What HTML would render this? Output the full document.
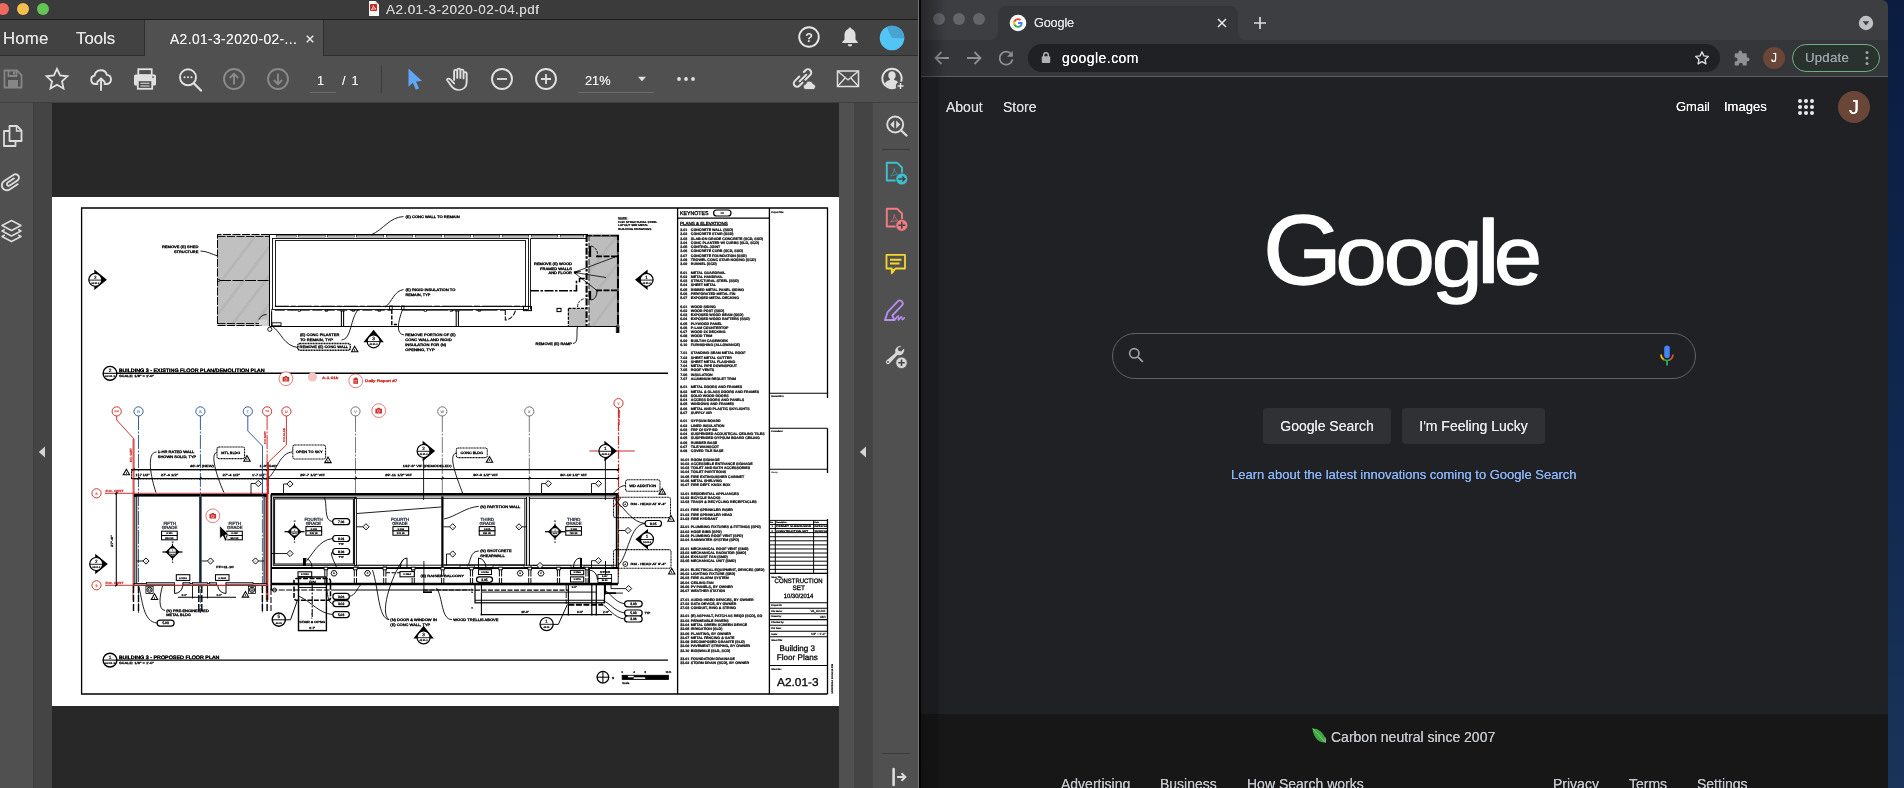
<!DOCTYPE html>
<html lang="en">
<head>
<meta charset="utf-8">
<title>Screen</title>
<style>
*{box-sizing:border-box;margin:0;padding:0}
html,body{width:1904px;height:788px;overflow:hidden;background:#0d1a33;font-family:"Liberation Sans",sans-serif}
.abs{position:absolute}
#acro,#chr{will-change:transform}
#desk{position:absolute;left:0;top:0;width:1904px;height:788px;background:linear-gradient(180deg,#0b1c40 0%,#10284f 55%,#1a3358 100%)}
/* ---------- Acrobat ---------- */
#acro{position:absolute;left:0;top:0;width:919px;height:788px;background:#282828;overflow:hidden}
#acro .titlebar{position:absolute;left:0;top:0;width:919px;height:19px;background:#3b3b3b}
#acro .titleline{position:absolute;left:0;top:19px;width:919px;height:1px;background:#1c1c1c}
#acro .tabbar{position:absolute;left:0;top:20px;width:919px;height:36px;background:#424242;border-bottom:1px solid #2e2e2e}
#acro .acttab{position:absolute;left:144px;top:20px;width:180px;height:36px;background:#505050;border-left:1px solid #2e2e2e;border-right:1px solid #2e2e2e}
#acro .toolbar{position:absolute;left:0;top:56px;width:919px;height:47px;background:#505050}
#acro .toolline{position:absolute;left:0;top:102px;width:919px;height:1px;background:#3e3e3e}
#acro .lrail{position:absolute;left:0;top:103px;width:33px;height:685px;background:#505050}
#acro .lstrip{position:absolute;left:33px;top:103px;width:19px;height:685px;background:#444444;border-left:1px solid #404040}
#acro .rscroll{position:absolute;left:839px;top:103px;width:15px;height:685px;background:#505050}
#acro .rstrip{position:absolute;left:854px;top:103px;width:18px;height:685px;background:#444444}
#acro .rrail{position:absolute;left:872px;top:103px;width:47px;height:685px;background:#505050;border-left:1px solid #454545}
#acro .page{position:absolute;left:52px;top:197px;width:787px;height:509px;background:#fff}
.tl{position:absolute;width:12px;height:12px;border-radius:50%}
.atxt{position:absolute;color:#e6e6e6;white-space:nowrap;text-shadow:0 0 .45px rgba(255,255,255,.75)}
/* ---------- Chrome ---------- */
#chr{position:absolute;left:920px;top:0;width:968px;height:788px;background:#202124;overflow:hidden;border-top-right-radius:6px}
#chr .tabstrip{position:absolute;left:0;top:0;width:968px;height:40px;background:#3c3e41}
#chr .tab{position:absolute;left:78px;top:6px;width:240px;height:34px;background:#35363a;border-radius:8px 8px 0 0}
#chr .tbar{position:absolute;left:0;top:40px;width:968px;height:36px;background:#35363a}
#chr .tline{position:absolute;left:0;top:76px;width:968px;height:1px;background:#5b5d60}
#chr .url{position:absolute;left:108px;top:44px;width:692px;height:28px;border-radius:14px;background:#202124}
.gtxt{position:absolute;white-space:nowrap;color:#e8eaed;text-shadow:0 0 .4px currentColor}
#chr .foot{position:absolute;left:0;top:714px;width:968px;height:74px;background:#171717}
#chr .shade{position:absolute;left:0;top:0;width:26px;height:77px;background:linear-gradient(90deg,rgba(0,0,0,.36),rgba(0,0,0,.2) 55%,rgba(0,0,0,0))}
#chr .shade2{position:absolute;left:0;top:77px;width:20px;height:711px;background:linear-gradient(90deg,rgba(0,0,0,.3),rgba(0,0,0,.2) 15%,rgba(0,0,0,.17) 90%,rgba(0,0,0,0))}
</style>
</head>
<body>
<div id="desk"></div>

<!-- ================= ACROBAT ================= -->
<div id="acro">
  <div class="titlebar"></div><div class="titleline"></div>
  <div class="tabbar"></div><div class="acttab"></div>
  <div class="toolbar"></div><div class="toolline"></div>
  <div class="lrail"></div><div class="lstrip"></div>
  <div class="rscroll"></div><div class="rstrip"></div><div class="rrail"></div>
  <div class="page"></div>
  <!--ACRO-UI-START-->
  <!-- traffic lights -->
  <div class="tl" style="left:-3px;top:3px;background:#ed6a5e"></div>
  <div class="tl" style="left:17px;top:3px;background:#f5bf4f"></div>
  <div class="tl" style="left:37px;top:3px;background:#62c554"></div>
  <!-- title -->
  <svg class="abs" style="left:368px;top:0" width="12" height="18" viewBox="0 0 12 18"><path d="M1 1h6.5L11 4.5V16H1z" fill="#fafafa"/><path d="M7.5 1V4.5H11z" fill="#d0d0d0"/><rect x="2" y="4" width="7" height="7" rx="1" fill="#c8281e"/><path d="M3.2 9.6c1.2-.6 2-2.2 2.2-4 .3 1.800 1.300 3 2.600 3.300-1.700 0-3.400.2-4.800.7z" fill="none" stroke="#fff" stroke-width=".7"/></svg>
  <div class="atxt" style="left:386px;top:2px;font-size:13.5px;line-height:16px;color:#d2d2d2;letter-spacing:0.46px">A2.01-3-2020-02-04.pdf</div>
  <!-- tab bar -->
  <div class="atxt" style="left:3px;top:28.500px;font-size:16.8px;line-height:20px;color:#e4e4e4;letter-spacing:.2px">Home</div>
  <div class="atxt" style="left:76px;top:28.500px;font-size:16.8px;line-height:20px;color:#e4e4e4">Tools</div>
  <div class="atxt" style="left:170px;top:31px;font-size:13.8px;line-height:18px;color:#f2f2f2;letter-spacing:.4px">A2.01-3-2020-02-...</div>
  <svg class="abs" style="left:305px;top:34px" width="10" height="10" viewBox="0 0 10 10"><path d="M1.800 1.800l6.400 6.400M8.200 1.800l-6.400 6.400" stroke="#e6e6e6" stroke-width="1.500"/></svg>
  <!-- help -->
  <svg class="abs" style="left:797px;top:25px" width="24" height="24" viewBox="0 0 24 24"><circle cx="12" cy="12" r="9.800" fill="none" stroke="#e6e6e6" stroke-width="1.900"/><text x="12" y="16.600" text-anchor="middle" font-family="Liberation Sans, sans-serif" font-weight="bold" font-size="12.500" fill="#e6e6e6">?</text></svg>
  <!-- bell -->
  <svg class="abs" style="left:838px;top:25px" width="24" height="24" viewBox="0 0 24 24"><path d="M12 2.500c.9 0 1.500.6 1.500 1.400 2.600.8 4 3 4 5.800v4.800l2.200 2.600v1H4.300v-1l2.200-2.600V9.700c0-2.800 1.400-5 4-5.800 0-.8.600-1.400 1.500-1.400z" fill="#e0e0e0"/><path d="M9.800 19.300h4.400a2.200 2.200 0 0 1-4.400 0z" fill="#e0e0e0"/></svg>
  <!-- avatar -->
  <svg class="abs" style="left:879px;top:25px" width="26" height="26" viewBox="0 0 26 26"><circle cx="13" cy="13" r="12.300" fill="#52c5f5"/><path d="M13 13L7.500 2a12.300 12.300 0 0 1 17.800 11.500z" fill="#46a3d2"/></svg>

  <!-- toolbar icons -->
  <!-- save (disabled) -->
  <svg class="abs" style="left:2px;top:68px" width="22" height="22" viewBox="0 0 22 22"><path d="M2.500 2.500h12.500l4.500 4.500v12.500h-17z" fill="none" stroke="#868686" stroke-width="1.800"/><path d="M6.500 2.500v5.500h8v-5.500" fill="none" stroke="#868686" stroke-width="1.800"/><rect x="11" y="3.500" width="2" height="3" fill="#868686"/><rect x="6" y="12" width="10" height="7" fill="#868686"/></svg>
  <!-- star -->
  <svg class="abs" style="left:44px;top:66px" width="26" height="26" viewBox="0 0 26 26"><path d="M13 2.800l3.100 6.700 7.300.8-5.400 5 1.500 7.200L13 18.800 6.500 22.500 8 15.300l-5.400-5 7.300-.8z" fill="none" stroke="#e0e0e0" stroke-width="1.800" stroke-linejoin="miter"/></svg>
  <!-- cloud upload -->
  <svg class="abs" style="left:88px;top:66px" width="26" height="26" viewBox="0 0 26 26"><path d="M9.500 18H7.300a4.300 4.300 0 0 1-.7-8.500 6.300 6.300 0 0 1 12.300-.6 4.600 4.600 0 0 1 .3 9.100h-2.700" fill="none" stroke="#e0e0e0" stroke-width="1.900" stroke-linecap="round"/><path d="M13 24V12.500M9.300 16L13 12.300 16.700 16" fill="none" stroke="#e0e0e0" stroke-width="1.900" stroke-linecap="round" stroke-linejoin="round"/></svg>
  <!-- printer -->
  <svg class="abs" style="left:132px;top:66px" width="26" height="26" viewBox="0 0 26 26"><rect x="6.300" y="3.200" width="13.400" height="6" fill="none" stroke="#e0e0e0" stroke-width="1.800"/><path d="M3.500 8.500h19a1.500 1.500 0 0 1 1.500 1.500v8a1.500 1.500 0 0 1-1.500 1.500H20.500V14h-15v5.500H3.500A1.500 1.500 0 0 1 2 18v-8a1.500 1.500 0 0 1 1.500-1.500z" fill="#e0e0e0"/><rect x="5.800" y="14.300" width="14.400" height="8.500" fill="#505050" stroke="#e0e0e0" stroke-width="1.800"/><path d="M8.500 17.300h9M8.500 20h9" stroke="#e0e0e0" stroke-width="1.100"/><rect x="20" y="10.500" width="2" height="1.200" fill="#505050"/></svg>
  <!-- find -->
  <svg class="abs" style="left:177px;top:66px" width="26" height="26" viewBox="0 0 26 26"><circle cx="11" cy="11.300" r="8" fill="none" stroke="#e0e0e0" stroke-width="1.900"/><path d="M17 17.500l7 7" stroke="#e0e0e0" stroke-width="2.300" stroke-linecap="round"/><circle cx="7.600" cy="11.300" r="1.050" fill="#e0e0e0"/><circle cx="11" cy="11.300" r="1.050" fill="#e0e0e0"/><circle cx="14.400" cy="11.300" r="1.050" fill="#e0e0e0"/></svg>
  <!-- up / down (disabled) -->
  <svg class="abs" style="left:222px;top:67px" width="24" height="24" viewBox="0 0 24 24"><circle cx="12" cy="12" r="10" fill="none" stroke="#8a8a8a" stroke-width="1.900"/><path d="M12 17.500V7M7.800 11L12 6.800 16.200 11" fill="none" stroke="#8a8a8a" stroke-width="1.900"/></svg>
  <svg class="abs" style="left:266px;top:67px" width="24" height="24" viewBox="0 0 24 24"><circle cx="12" cy="12" r="10" fill="none" stroke="#8a8a8a" stroke-width="1.900"/><path d="M12 6.500V17M7.800 13L12 17.200 16.200 13" fill="none" stroke="#8a8a8a" stroke-width="1.900"/></svg>
  <div class="atxt" style="left:317px;top:73px;font-size:12.700px;line-height:16px;color:#f0f0f0">1</div>
  <div class="abs" style="left:310px;top:92px;width:26px;height:1px;background:#6c6c6c"></div>
  <div class="atxt" style="left:342px;top:73px;font-size:12.700px;line-height:16px;color:#f0f0f0;word-spacing:2.500px">/ 1</div>
  <div class="abs" style="left:381px;top:65px;width:1px;height:28px;background:#3a3a3a"></div>
  <!-- pointer -->
  <svg class="abs" style="left:402px;top:66px" width="24" height="26" viewBox="0 0 24 26"><path d="M6.500 2.500v18.200l4.300-4 3.100 7 3.200-1.500-3.100-6.800 6-.3z" fill="#5fa8f5"/></svg>
  <!-- hand -->
  <svg class="abs" style="left:445px;top:66px" width="26" height="26" viewBox="0 0 26 26"><path d="M9.300 14V5.300a1.400 1.400 0 0 1 2.800 0V12 3.900a1.400 1.400 0 0 1 2.800 0V12 4.900a1.400 1.400 0 0 1 2.800 0V12.500 7.500a1.400 1.400 0 0 1 2.800 0V16c0 4.800-2.800 8-7 8-3.400 0-5.200-1.600-7-4.500L3.200 14.400c-.6-1 .2-2.200 1.400-1.800 1 .3 1.700 1 2.400 2l2.300 2.900" fill="none" stroke="#e0e0e0" stroke-width="1.700" stroke-linejoin="round" stroke-linecap="round" transform="translate(-1.300,0) scale(1.120,1)"/></svg>
  <!-- minus / plus -->
  <svg class="abs" style="left:490px;top:67px" width="24" height="24" viewBox="0 0 24 24"><circle cx="12" cy="12" r="10" fill="none" stroke="#e0e0e0" stroke-width="1.900"/><path d="M7 12h10" stroke="#e0e0e0" stroke-width="1.800"/></svg>
  <svg class="abs" style="left:534px;top:67px" width="24" height="24" viewBox="0 0 24 24"><circle cx="12" cy="12" r="10" fill="none" stroke="#e0e0e0" stroke-width="1.900"/><path d="M7 12h10M12 7v10" stroke="#e0e0e0" stroke-width="1.800"/></svg>
  <div class="atxt" style="left:585px;top:73px;font-size:12.800px;line-height:16px;color:#f0f0f0">21%</div>
  <div class="abs" style="left:578px;top:92px;width:76px;height:1px;background:#6c6c6c"></div>
  <svg class="abs" style="left:637px;top:76px" width="10" height="6" viewBox="0 0 10 6"><path d="M1 .8h8L5 5.200z" fill="#e0e0e0"/></svg>
  <svg class="abs" style="left:676px;top:76px" width="22" height="6" viewBox="0 0 22 6"><circle cx="3" cy="3" r="1.900" fill="#e0e0e0"/><circle cx="10" cy="3" r="1.900" fill="#e0e0e0"/><circle cx="17" cy="3" r="1.900" fill="#e0e0e0"/></svg>
  <!-- link cloud -->
  <svg class="abs" style="left:790px;top:66px" width="28" height="26" viewBox="0 0 28 26"><g fill="none" stroke="#e0e0e0" stroke-width="2" stroke-linecap="round"><path d="M9.300 10.500l-4.600 4.600a3.300 3.300 0 0 0 4.700 4.700l3.200-3.200"/><path d="M13.800 6l1.800-1.800a3.300 3.300 0 0 1 4.700 4.700l-4.900 4.900"/><path d="M9.600 15.400l6.600-6.600"/></g><path d="M16 23.500a2.600 2.600 0 0 1-.3-5.200 3.700 3.700 0 0 1 7.200-.6 3 3 0 0 1 .6 5.800z" fill="#e0e0e0" stroke="#505050" stroke-width=".8"/></svg>
  <!-- mail -->
  <svg class="abs" style="left:836px;top:68px" width="24" height="22" viewBox="0 0 24 22"><rect x="1.500" y="3" width="21" height="15.500" fill="none" stroke="#e0e0e0" stroke-width="1.500"/><path d="M1.500 3L12 12 22.500 3M1.500 18.500L9.300 9.800M22.500 18.500L14.700 9.800" fill="none" stroke="#e0e0e0" stroke-width="1.300"/></svg>
  <!-- user add -->
  <svg class="abs" style="left:879px;top:66px" width="28" height="26" viewBox="0 0 28 26"><circle cx="13" cy="12.500" r="9.700" fill="none" stroke="#e0e0e0" stroke-width="1.900"/><path d="M13 5.200c2.300 0 3.700 1.700 3.700 4 0 1.600-.7 3-1.600 3.700v1.200c2.300.6 4.200 1.700 5 3.300A9.600 9.600 0 0 1 13 21.800a9.600 9.600 0 0 1-7.100-4.400c.8-1.600 2.700-2.700 5-3.300v-1.200c-.9-.7-1.600-2.100-1.600-3.700 0-2.300 1.400-4 3.700-4z" fill="#e0e0e0"/><circle cx="21.500" cy="20" r="4.600" fill="#505050"/><path d="M18.500 20h6M21.500 17v6" stroke="#e0e0e0" stroke-width="1.500"/></svg>

  <!-- left rail icons -->
  <svg class="abs" style="left:2px;top:124px" width="22" height="24" viewBox="0 0 22 24"><path d="M7.500 2h7.500l4.500 4.500V17H7.500z" fill="none" stroke="#dcdcdc" stroke-width="1.800" stroke-linejoin="round"/><path d="M14.500 2.300V7h4.700" fill="none" stroke="#dcdcdc" stroke-width="1.400"/><path d="M7 7H2v15h11.500v-4.500" fill="none" stroke="#dcdcdc" stroke-width="1.800" stroke-linejoin="round"/></svg>
  <svg class="abs" style="left:-2px;top:169px" width="26" height="26" viewBox="0 0 24 24"><path transform="rotate(-33 12 12.500)" d="M2 12.500C2 9.460 4.460 7 7.500 7H18c2.210 0 4 1.790 4 4s-1.790 4-4 4H9.500C8.120 15 7 13.880 7 12.500S8.120 10 9.500 10H17v1.700H9.500c-1.050 0-1.050 1.600 0 1.600H18c1.300 0 2.300-1 2.300-2.300S19.300 8.700 18 8.700H7.500c-2.100 0-3.800 1.700-3.800 3.800s1.700 3.800 3.800 3.800H17V18H7.500C4.460 18 2 15.540 2 12.500z" fill="#dcdcdc"/></svg>
  <svg class="abs" style="left:0px;top:218px" width="24" height="26" viewBox="0 0 24 26"><g fill="none" stroke="#dcdcdc" stroke-width="1.500" stroke-linejoin="round"><path d="M11.500 2.500l9.500 5-9.500 5-9.500-5z"/><path d="M4.800 11.500L2 13l9.500 5 9.500-5-2.800-1.500"/><path d="M4.800 17L2 18.500l9.500 5 9.500-5-2.800-1.500"/></g></svg>
  <!-- collapse arrows -->
  <svg class="abs" style="left:38px;top:446px" width="8" height="12" viewBox="0 0 8 12"><path d="M7 .5v11L.8 6z" fill="#d4d4d4"/></svg>
  <svg class="abs" style="left:859px;top:446px" width="8" height="12" viewBox="0 0 8 12"><path d="M7 .5v11L.8 6z" fill="#d4d4d4"/></svg>
  <!-- right rail icons -->
  <svg class="abs" style="left:883px;top:112px" width="26" height="26" viewBox="0 0 26 26"><circle cx="12.200" cy="12.500" r="8" fill="none" stroke="#dcdcdc" stroke-width="1.900"/><path d="M18.200 18.500l5.300 5" stroke="#dcdcdc" stroke-width="2.400" stroke-linecap="round"/><path d="M11.200 8.500v8l-4-4zM13.200 8.500v8l4-4z" fill="#dcdcdc"/></svg>
  <div class="abs" style="left:882px;top:149px;width:28px;height:1px;background:#3a3a3a"></div>
  <!-- export pdf -->
  <svg class="abs" style="left:884px;top:160px" width="26" height="28" viewBox="0 0 26 28"><path d="M2.800 2.800h10.500l4.700 4.700V20.500H2.800z" fill="none" stroke="#3cc0cf" stroke-width="1.900" stroke-linejoin="round"/><path d="M6.500 16c2.200-1.200 3.600-4.200 3.800-7.500.5 3.300 2.200 5.600 4.700 6.300-3.200-.2-6 .3-8.500 1.200z" fill="none" stroke="#3c8d9b" stroke-width="1"/><circle cx="17.800" cy="19" r="6" fill="#3cc0cf" stroke="#505050" stroke-width=".8"/><path d="M14.300 19h6.500M18.300 16.400l2.700 2.600-2.700 2.600" fill="none" stroke="#444" stroke-width="1.400"/></svg>
  <!-- create pdf -->
  <svg class="abs" style="left:884px;top:206px" width="26" height="28" viewBox="0 0 26 28"><path d="M2.800 2.800h10.500l4.700 4.700V20.500H2.800z" fill="none" stroke="#f17d84" stroke-width="1.900" stroke-linejoin="round"/><path d="M6.500 16c2.200-1.200 3.600-4.200 3.800-7.500.5 3.300 2.200 5.600 4.700 6.300-3.200-.2-6 .3-8.500 1.200z" fill="none" stroke="#c2676d" stroke-width="1"/><circle cx="17.800" cy="19.300" r="6" fill="#f17d84" stroke="#505050" stroke-width=".8"/><path d="M14.300 19.300h7M17.800 15.800v7" fill="none" stroke="#444" stroke-width="1.500"/></svg>
  <!-- comment -->
  <svg class="abs" style="left:884px;top:252px" width="24" height="26" viewBox="0 0 24 26"><path d="M2.500 2.800h18.500v13.700H11.500l-3.700 4.700v-4.700H2.500z" fill="none" stroke="#f5d52b" stroke-width="1.800" stroke-linejoin="round"/><path d="M8 17l0 4 3.300-4z" fill="#f5d52b"/><path d="M6 7.800h11.500M6 11.500h9.500" stroke="#f5d52b" stroke-width="1.900"/></svg>
  <!-- fill & sign -->
  <svg class="abs" style="left:882px;top:298px" width="28" height="26" viewBox="0 0 28 26"><path d="M3 22l2.600-7.800L15.800 3.300c1.100-1.200 2.700-1.200 3.800-.1l.4.400c1.100 1.100 1.100 2.700 0 3.800L10.300 17.500 12.500 22z" fill="none" stroke="#b78df0" stroke-width="1.900" stroke-linejoin="round" transform="translate(0,0)"/><path d="M3 22.200h9.500c1.500-1.500 2.700-4.200 3.600-4.200 1 0-.4 4 .6 4 1.100 0 1.600-3.300 2.600-3.300s.3 3 1.300 3c.7 0 1.200-1.500 1.800-2" fill="none" stroke="#b78df0" stroke-width="1.500" stroke-linecap="round" stroke-linejoin="round"/></svg>
  <!-- wrench plus -->
  <svg class="abs" style="left:883px;top:343px" width="28" height="28" viewBox="0 0 28 28"><path d="M18.600 3.300a5.200 5.200 0 0 0-6.300 6.800L3.500 17.500a2.100 2.100 0 1 0 3 3l8-8.500a5.200 5.200 0 0 0 6.600-6.500l-3 3-2.700-.7-.7-2.700z" fill="#d6d6d6"/><circle cx="5" cy="19" r=".9" fill="#505050"/><circle cx="18.500" cy="19.800" r="5.800" fill="#d6d6d6" stroke="#505050" stroke-width=".8"/><path d="M15.300 19.800h6.400M18.500 16.600v6.400" stroke="#444" stroke-width="1.500"/></svg>
  <div class="abs" style="left:882px;top:753px;width:28px;height:1px;background:#3c3c3c"></div>
  <svg class="abs" style="left:890px;top:767px" width="20" height="20" viewBox="0 0 20 20"><path d="M3.600 2v16" stroke="#dcdcdc" stroke-width="2.600" stroke-linecap="round"/><path d="M7 10h8M11.500 6.300L15.300 10l-3.800 3.700" fill="none" stroke="#dcdcdc" stroke-width="2"/></svg>
<!--ACRO-UI-END-->
  <!--PDF-S-->
<svg class="abs" style="left:52px;top:197px" width="787" height="509" viewBox="52 197 787 509" font-family="Liberation Sans, sans-serif" fill="#000" text-rendering="geometricPrecision">
<path d="M827.500 208 H81.600 V694 H827.500" fill="none" stroke="#000" stroke-width="1.3125"/>
<line x1="827.5" y1="207.5" x2="827.5" y2="398" stroke="#000" stroke-width="1.3125"/>
<line x1="677.6" y1="208" x2="677.6" y2="694" stroke="#000" stroke-width="1.3125"/>
<line x1="769.4" y1="208" x2="769.4" y2="694" stroke="#000" stroke-width="1.3125"/>
<line x1="677.6" y1="218.1" x2="769.4" y2="218.1" stroke="#000" stroke-width="1.1375"/>
<text x="680" y="215.12" font-size="5.6" textLength="28.5" lengthAdjust="spacingAndGlyphs" font-weight="normal" stroke="#000" stroke-width="0.3">KEYNOTES</text>
<rect x="713.6" y="210" width="17.4" height="6" fill="none" stroke="#000" stroke-width="1.2249999999999999" rx="3"/>
<line x1="720.5" y1="213" x2="724" y2="213" stroke="#000" stroke-width="1.05"/>
<text x="680" y="224.62" font-size="4.5" textLength="47.8" lengthAdjust="spacingAndGlyphs" font-weight="normal" stroke="#000" stroke-width="0.28">PLANS &amp; ELEVATIONS</text>
<line x1="680" y1="225.3" x2="727.8" y2="225.3" stroke="#000" stroke-width="0.7875"/>
<g font-size="3.62" font-weight="bold" stroke="#000" stroke-width=".2">
<text x="680.2" y="230.7">3.01</text><text x="690.8" y="230.7">CONCRETE WALL (SSD)</text>
<text x="680.2" y="234.7">3.02</text><text x="690.8" y="234.7">CONCRETE STAIR (SSD)</text>
<text x="680.2" y="239.7">3.03</text><text x="690.8" y="239.7">SLAB-ON GRADE CONCRETE (SCD, SSD)</text>
<text x="680.2" y="243.7">3.04</text><text x="690.8" y="243.7">CONC PLANTER W/ CURBS (SLD, SCD)</text>
<text x="680.2" y="247.8">3.05</text><text x="690.8" y="247.8">CONTROL JOINT</text>
<text x="680.2" y="251.7">3.06</text><text x="690.8" y="251.7">CONCRETE CURB (SCD, SSD)</text>
<text x="680.2" y="256.6">3.07</text><text x="690.8" y="256.6">CONCRETE FOUNDATION (SSD)</text>
<text x="680.2" y="260.7">3.08</text><text x="690.8" y="260.7">TROWEL CONC STAIR NOSING (SCD)</text>
<text x="680.2" y="264.7">3.09</text><text x="690.8" y="264.7">RUNNEL (SCD)</text>
<text x="680.2" y="273.9">5.01</text><text x="690.8" y="273.9">METAL GUARDRAIL</text>
<text x="680.2" y="277.8">5.02</text><text x="690.8" y="277.8">METAL HANDRAIL</text>
<text x="680.2" y="281.8">5.03</text><text x="690.8" y="281.8">STRUCTURAL STEEL (SSD)</text>
<text x="680.2" y="285.8">5.04</text><text x="690.8" y="285.8">SHEET METAL</text>
<text x="680.2" y="290.6">5.05</text><text x="690.8" y="290.6">RIBBED METAL PANEL SIDING</text>
<text x="680.2" y="294.6">5.06</text><text x="690.8" y="294.6">PERFORATED METAL FIN</text>
<text x="680.2" y="298.6">5.07</text><text x="690.8" y="298.6">EXPOSED METAL DECKING</text>
<text x="680.2" y="307.6">6.01</text><text x="690.8" y="307.6">WOOD SIDING</text>
<text x="680.2" y="311.6">6.02</text><text x="690.8" y="311.6">WOOD POST (SSD)</text>
<text x="680.2" y="315.6">6.03</text><text x="690.8" y="315.6">EXPOSED WOOD BEAM (SSD)</text>
<text x="680.2" y="319.6">6.04</text><text x="690.8" y="319.6">EXPOSED WOOD RAFTERS (SSD)</text>
<text x="680.2" y="324.6">6.05</text><text x="690.8" y="324.6">PLYWOOD PANEL</text>
<text x="680.2" y="328.6">6.06</text><text x="690.8" y="328.6">P-LAM COUNTERTOP</text>
<text x="680.2" y="332.7">6.07</text><text x="690.8" y="332.7">WOOD 2X DECKING</text>
<text x="680.2" y="336.7">6.08</text><text x="690.8" y="336.7">WOOD TRIM</text>
<text x="680.2" y="341.6">6.09</text><text x="690.8" y="341.6">BUILT-IN CASEWORK</text>
<text x="680.2" y="345.6">6.10</text><text x="690.8" y="345.6">FURNISHING (ALLOWANCE)</text>
<text x="680.2" y="353.6">7.01</text><text x="690.8" y="353.6">STANDING SEAM METAL ROOF</text>
<text x="680.2" y="358.5">7.02</text><text x="690.8" y="358.5">SHEET METAL GUTTER</text>
<text x="680.2" y="362.5">7.03</text><text x="690.8" y="362.5">SHEET METAL FLASHING</text>
<text x="680.2" y="366.5">7.04</text><text x="690.8" y="366.5">METAL PIPE DOWNSPOUT</text>
<text x="680.2" y="370.6">7.05</text><text x="690.8" y="370.6">ROOF VENTS</text>
<text x="680.2" y="375.6">7.06</text><text x="690.8" y="375.6">INSULATION</text>
<text x="680.2" y="379.6">7.07</text><text x="690.8" y="379.6">ALUMINUM REGLET TRIM</text>
<text x="680.2" y="387.7">8.01</text><text x="690.8" y="387.7">METAL DOORS AND FRAMES</text>
<text x="680.2" y="392.6">8.02</text><text x="690.8" y="392.6">METAL &amp; GLASS DOORS AND FRAMES</text>
<text x="680.2" y="396.6">8.03</text><text x="690.8" y="396.6">SOLID WOOD DOORS</text>
<text x="680.2" y="400.6">8.04</text><text x="690.8" y="400.6">ACCESS DOORS AND PANELS</text>
<text x="680.2" y="404.6">8.05</text><text x="690.8" y="404.6">WINDOWS AND FRAMES</text>
<text x="680.2" y="409.6">8.06</text><text x="690.8" y="409.6">METAL AND PLASTIC SKYLIGHTS</text>
<text x="680.2" y="413.6">8.07</text><text x="690.8" y="413.6">SUPPLY AIR</text>
<text x="680.2" y="421.7">9.01</text><text x="690.8" y="421.7">GYPSUM BOARD</text>
<text x="680.2" y="426.6">9.02</text><text x="690.8" y="426.6">LINED INSULATION</text>
<text x="680.2" y="430.6">9.03</text><text x="690.8" y="430.6">FRP O/ GYP BD</text>
<text x="680.2" y="434.6">9.04</text><text x="690.8" y="434.6">SUSPENDED ACOUSTICAL CEILING TILES</text>
<text x="680.2" y="438.7">9.05</text><text x="690.8" y="438.7">SUSPENDED GYPSUM BOARD CEILING</text>
<text x="680.2" y="443.6">9.06</text><text x="690.8" y="443.6">RUBBER BASE</text>
<text x="680.2" y="447.6">9.07</text><text x="690.8" y="447.6">TILE WAINSCOT</text>
<text x="680.2" y="451.6">9.08</text><text x="690.8" y="451.6">COVED TILE BASE</text>
<text x="680.2" y="460.8">10.01</text><text x="690.8" y="460.8">ROOM SIGNAGE</text>
<text x="680.2" y="464.8">10.02</text><text x="690.8" y="464.8">ACCESSIBLE ENTRANCE SIGNAGE</text>
<text x="680.2" y="468.7">10.03</text><text x="690.8" y="468.7">TOILET AND BATH ACCESSORIES</text>
<text x="680.2" y="472.7">10.04</text><text x="690.8" y="472.7">TOILET PARTITIONS</text>
<text x="680.2" y="477.7">10.05</text><text x="690.8" y="477.7">FIRE EXTINGUISHER CABINET</text>
<text x="680.2" y="481.7">10.06</text><text x="690.8" y="481.7">METAL SHELVING</text>
<text x="680.2" y="485.7">10.07</text><text x="690.8" y="485.7">FIRE DEPT. KNOX BOX</text>
<text x="680.2" y="494.8">12.01</text><text x="690.8" y="494.8">RESIDENTIAL APPLIANCES</text>
<text x="680.2" y="498.7">12.02</text><text x="690.8" y="498.7">BICYCLE RACKS</text>
<text x="680.2" y="502.7">12.03</text><text x="690.8" y="502.7">TRASH &amp; RECYCLING RECEPTACLES</text>
<text x="680.2" y="510.7">21.01</text><text x="690.8" y="510.7">FIRE SPRINKLER RISER</text>
<text x="680.2" y="515.7">21.02</text><text x="690.8" y="515.7">FIRE SPRINKLER HEAD</text>
<text x="680.2" y="519.6">21.03</text><text x="690.8" y="519.6">FIRE HYDRANT</text>
<text x="680.2" y="527.8">22.01</text><text x="690.8" y="527.8">PLUMBING FIXTURES &amp; FITTINGS (SPD)</text>
<text x="680.2" y="532.7">22.02</text><text x="690.8" y="532.7">HOSE BIBB (SPD)</text>
<text x="680.2" y="536.7">22.03</text><text x="690.8" y="536.7">PLUMBING ROOF VENT (SPD)</text>
<text x="680.2" y="540.7">22.04</text><text x="690.8" y="540.7">RAINWATER SYSTEM (SPD)</text>
<text x="680.2" y="549.7">23.01</text><text x="690.8" y="549.7">MECHANICAL ROOF VENT (SMD)</text>
<text x="680.2" y="553.7">23.02</text><text x="690.8" y="553.7">MECHANICAL RADIATOR (SMD)</text>
<text x="680.2" y="557.7">23.04</text><text x="690.8" y="557.7">EXHAUST FAN (SMD)</text>
<text x="680.2" y="561.7">23.05</text><text x="690.8" y="561.7">MECHANICAL UNIT (SMD)</text>
<text x="680.2" y="570.7">26.01</text><text x="690.8" y="570.7">ELECTRICAL EQUIPMENT, DEVICES (SED)</text>
<text x="680.2" y="574.7">26.02</text><text x="690.8" y="574.7">LIGHTING FIXTURE (SED)</text>
<text x="680.2" y="578.7">26.03</text><text x="690.8" y="578.7">FIRE ALARM SYSTEM</text>
<text x="680.2" y="583.6">26.04</text><text x="690.8" y="583.6">CEILING FAN</text>
<text x="680.2" y="587.6">26.06</text><text x="690.8" y="587.6">PV PANELS, BY OWNER</text>
<text x="680.2" y="591.7">26.07</text><text x="690.8" y="591.7">WEATHER STATION</text>
<text x="680.2" y="600.8">27.01</text><text x="690.8" y="600.8">AUDIO-VIDEO DEVICES, BY OWNER</text>
<text x="680.2" y="604.7">27.02</text><text x="690.8" y="604.7">DATA DEVICE, BY OWNER</text>
<text x="680.2" y="608.7">27.03</text><text x="690.8" y="608.7">CONDUIT, RING &amp; STRING</text>
<text x="680.2" y="616.6">32.01</text><text x="690.8" y="616.6">(E) ASPHALT, PATCH AS REQD (SCD), SO</text>
<text x="680.2" y="621.5">32.02</text><text x="690.8" y="621.5">PERMEABLE PAVERS</text>
<text x="680.2" y="625.5">32.04</text><text x="690.8" y="625.5">METAL GREEN SCREEN DEVICE</text>
<text x="680.2" y="629.6">32.05</text><text x="690.8" y="629.6">IRRIGATION (SLD)</text>
<text x="680.2" y="634.5">32.06</text><text x="690.8" y="634.5">PLANTING, BY OWNER</text>
<text x="680.2" y="638.5">32.07</text><text x="690.8" y="638.5">METAL FENCING &amp; GATE</text>
<text x="680.2" y="642.5">32.08</text><text x="690.8" y="642.5">DECOMPOSED GRANITE (SLD)</text>
<text x="680.2" y="646.6">32.09</text><text x="690.8" y="646.6">PAVEMENT STRIPING, BY OWNER</text>
<text x="680.2" y="651.5">32.10</text><text x="690.8" y="651.5">BIOSWALE (SLD, SCD)</text>
<text x="680.2" y="659.5">33.01</text><text x="690.8" y="659.5">FOUNDATION DRAINAGE</text>
<text x="680.2" y="663.6">33.02</text><text x="690.8" y="663.6">STORM DRAIN (SCD), BY OWNER</text>
</g>
<line x1="827.5" y1="428.3" x2="827.5" y2="473" stroke="#000" stroke-width="1.3125"/>
<line x1="827.5" y1="519" x2="827.5" y2="694" stroke="#000" stroke-width="1.3125"/>
<line x1="769.4" y1="393.3" x2="827.5" y2="393.3" stroke="#000" stroke-width="1.1375"/>
<line x1="769.4" y1="428.3" x2="827.5" y2="428.3" stroke="#000" stroke-width="1.1375"/>
<line x1="769.4" y1="469.3" x2="827.5" y2="469.3" stroke="#000" stroke-width="1.1375"/>
<text x="771.3" y="212.83" font-size="2.3" stroke="#000" stroke-width="0.2">Project Title:</text>
<text x="771.3" y="397.43" font-size="2.3" stroke="#000" stroke-width="0.2">Owner/Firm:</text>
<text x="771.3" y="432.43" font-size="2.3" stroke="#000" stroke-width="0.2">Consultant:</text>
<text x="771.3" y="473.16" font-size="2.1" opacity="0.7" stroke="#000" stroke-width="0.18">Stamp:</text>
<line x1="769.4" y1="520.4" x2="827.5" y2="520.4" stroke="#000" stroke-width="0.9625000000000001"/>
<line x1="769.4" y1="524.48" x2="827.5" y2="524.48" stroke="#000" stroke-width="0.9625000000000001"/>
<line x1="769.4" y1="528.56" x2="827.5" y2="528.56" stroke="#000" stroke-width="0.9625000000000001"/>
<line x1="769.4" y1="532.64" x2="827.5" y2="532.64" stroke="#000" stroke-width="0.9625000000000001"/>
<line x1="769.4" y1="536.72" x2="827.5" y2="536.72" stroke="#000" stroke-width="0.9625000000000001"/>
<line x1="769.4" y1="540.8" x2="827.5" y2="540.8" stroke="#000" stroke-width="0.9625000000000001"/>
<line x1="769.4" y1="544.88" x2="827.5" y2="544.88" stroke="#000" stroke-width="0.9625000000000001"/>
<line x1="769.4" y1="548.96" x2="827.5" y2="548.96" stroke="#000" stroke-width="0.9625000000000001"/>
<line x1="769.4" y1="553.04" x2="827.5" y2="553.04" stroke="#000" stroke-width="0.9625000000000001"/>
<line x1="769.4" y1="557.12" x2="827.5" y2="557.12" stroke="#000" stroke-width="0.9625000000000001"/>
<line x1="769.4" y1="561.2" x2="827.5" y2="561.2" stroke="#000" stroke-width="0.9625000000000001"/>
<line x1="769.4" y1="565.28" x2="827.5" y2="565.28" stroke="#000" stroke-width="0.9625000000000001"/>
<line x1="769.4" y1="569.36" x2="827.5" y2="569.36" stroke="#000" stroke-width="0.9625000000000001"/>
<line x1="769.4" y1="573.44" x2="827.5" y2="573.44" stroke="#000" stroke-width="0.9625000000000001"/>
<line x1="775.3" y1="520.4" x2="775.3" y2="573.4" stroke="#000" stroke-width="0.9625000000000001"/>
<line x1="813.6" y1="520.4" x2="813.6" y2="573.4" stroke="#000" stroke-width="0.9625000000000001"/>
<text x="770.2" y="523.26" font-size="2.1" stroke="#000" stroke-width="0.18">No.</text>
<text x="776.2" y="523.26" font-size="2.1" stroke="#000" stroke-width="0.18">Description</text>
<text x="814.5" y="523.26" font-size="2.1" stroke="#000" stroke-width="0.18">Date</text>
<text x="771.4" y="527.46" font-size="2.4" stroke="#000" stroke-width="0.2">1</text>
<text x="776.2" y="527.46" font-size="2.4" textLength="35" lengthAdjust="spacingAndGlyphs" stroke="#000" stroke-width="0.2">PERMIT SUBMISSION</text>
<text x="814.3" y="527.46" font-size="2.4" textLength="12.5" lengthAdjust="spacingAndGlyphs" stroke="#000" stroke-width="0.2">04/18/14</text>
<text x="771.4" y="531.56" font-size="2.4" stroke="#000" stroke-width="0.2">2</text>
<text x="776.2" y="531.56" font-size="2.4" textLength="32" lengthAdjust="spacingAndGlyphs" stroke="#000" stroke-width="0.2">CONSTRUCTION SET</text>
<text x="814.3" y="531.56" font-size="2.4" textLength="12.5" lengthAdjust="spacingAndGlyphs" stroke="#000" stroke-width="0.2">10/30/14</text>
<line x1="769.4" y1="573.4" x2="827.5" y2="573.4" stroke="#000" stroke-width="1.1375"/>
<text x="771.3" y="577.53" font-size="2.3" stroke="#000" stroke-width="0.2">Issue Title:</text>
<text x="798.6" y="583.3" font-size="6.4" text-anchor="middle" textLength="48" lengthAdjust="spacingAndGlyphs" font-weight="normal" stroke="#000" stroke-width="0.28">CONSTRUCTION</text>
<text x="798.6" y="590.3" font-size="6.4" text-anchor="middle" font-weight="normal" stroke="#000" stroke-width="0.28">SET</text>
<text x="798.6" y="598.23" font-size="6.2" text-anchor="middle" textLength="29.5" lengthAdjust="spacingAndGlyphs" font-weight="normal" stroke="#000" stroke-width="0.28">10/30/2014</text>
<line x1="769.4" y1="602.7" x2="827.5" y2="602.7" stroke="#000" stroke-width="1.1375"/>
<line x1="769.4" y1="608.2" x2="827.5" y2="608.2" stroke="#000" stroke-width="1.1375"/>
<line x1="769.4" y1="613.7" x2="827.5" y2="613.7" stroke="#000" stroke-width="1.1375"/>
<line x1="769.4" y1="619.6" x2="827.5" y2="619.6" stroke="#000" stroke-width="1.1375"/>
<line x1="769.4" y1="625.3" x2="827.5" y2="625.3" stroke="#000" stroke-width="1.1375"/>
<line x1="769.4" y1="631.2" x2="827.5" y2="631.2" stroke="#000" stroke-width="1.1375"/>
<line x1="769.4" y1="636.8" x2="827.5" y2="636.8" stroke="#000" stroke-width="1.1375"/>
<line x1="769.4" y1="665.5" x2="827.5" y2="665.5" stroke="#000" stroke-width="1.1375"/>
<text x="771.3" y="606.13" font-size="2.3" stroke="#000" stroke-width="0.2">Project ID:</text>
<text x="771.3" y="611.73" font-size="2.3" stroke="#000" stroke-width="0.2">File Name:</text>
<text x="771.3" y="617.43" font-size="2.3" stroke="#000" stroke-width="0.2">Drawn by:</text>
<text x="771.3" y="623.13" font-size="2.3" stroke="#000" stroke-width="0.2">Checked by:</text>
<text x="771.3" y="628.93" font-size="2.3" stroke="#000" stroke-width="0.2">Plot Date:</text>
<text x="771.3" y="634.73" font-size="2.3" stroke="#000" stroke-width="0.2">Scale:</text>
<text x="771.3" y="640.63" font-size="2.3" stroke="#000" stroke-width="0.2">Sheet Title:</text>
<text x="771.3" y="669.53" font-size="2.3" stroke="#000" stroke-width="0.2">Sheet No.:</text>
<text x="825.6" y="612.08" font-size="3" text-anchor="end" font-weight="normal" stroke="#000" stroke-width="0.15">VA_A2-201</text>
<text x="825.6" y="617.78" font-size="3" text-anchor="end" font-weight="normal" stroke="#000" stroke-width="0.15">VAD</text>
<text x="825.6" y="635.08" font-size="3" text-anchor="end" font-weight="normal" stroke="#000" stroke-width="0.15">1/8" = 1'-0"</text>
<text x="797.3" y="651.08" font-size="8" text-anchor="middle" textLength="35.5" lengthAdjust="spacingAndGlyphs" font-weight="normal" stroke="#000" stroke-width="0.28">Building 3</text>
<text x="797.3" y="660.08" font-size="8" text-anchor="middle" textLength="41" lengthAdjust="spacingAndGlyphs" font-weight="normal" stroke="#000" stroke-width="0.28">Floor Plans</text>
<text x="797.8" y="685.9" font-size="11.4" text-anchor="middle" textLength="41.5" lengthAdjust="spacingAndGlyphs" font-weight="normal" stroke="#000" stroke-width="0.28">A2.01-3</text>
<text transform="translate(832.6,693.83) rotate(-90)" font-size="2.3" textLength="30" lengthAdjust="spacingAndGlyphs" stroke="#000" stroke-width="0.2">10/30/2014 10:04:19 PM</text>
<circle cx="602.9" cy="677.2" r="5.8" fill="none" stroke="#000" stroke-width="1.2249999999999999"/>
<line x1="602.9" y1="671" x2="602.9" y2="683.4" stroke="#000" stroke-width="1.05"/>
<line x1="596.5" y1="677.2" x2="609.3" y2="677.2" stroke="#000" stroke-width="1.05"/>
<text x="612" y="678.88" font-size="3" stroke="#000" stroke-width="0.26">N</text>
<rect x="622.2" y="675.3" width="46.2" height="4.1" fill="#000" stroke="#000" stroke-width="0.875"/>
<rect x="628" y="675.8" width="5.7" height="1.5" fill="#fff" stroke="#000" stroke-width="0.0"/>
<rect x="633.7" y="677.3" width="11.5" height="1.6" fill="#fff" stroke="#000" stroke-width="0.0"/>
<text x="622.2" y="673.01" font-size="2.8" text-anchor="middle" stroke="#000" stroke-width="0.24">0</text>
<text x="634" y="673.01" font-size="2.8" text-anchor="middle" stroke="#000" stroke-width="0.24">4</text>
<text x="645.3" y="673.01" font-size="2.8" text-anchor="middle" stroke="#000" stroke-width="0.24">8</text>
<text x="668.5" y="673.01" font-size="2.8" text-anchor="middle" stroke="#000" stroke-width="0.24">16 ft.</text>
<text x="622.2" y="684.01" font-size="2.8" stroke="#000" stroke-width="0.24">Scale</text>
<defs><pattern id="hat" width="1.6" height="1.6" patternUnits="userSpaceOnUse"><rect width="1.6" height="1.6" fill="#c4c4c4"/><path d="M0 1.600L1.600 0" stroke="#8e8e8e" stroke-width=".55"/></pattern><clipPath id="c1"><rect x="217.2" y="234.600" width="52" height="91.200"/></clipPath><clipPath id="c2"><rect x="588" y="234.800" width="31" height="91.400"/></clipPath></defs>
<rect x="217.2" y="234.6" width="52.1" height="91.2" fill="#c0c0c0" stroke="#000" stroke-width="0.0"/>
<g clip-path="url(#c1)" stroke="#adadad" stroke-width="2.6" opacity=".55">
<line x1="187" y1="326" x2="257" y2="234"/>
<line x1="209" y1="326" x2="279" y2="234"/>
<line x1="231" y1="326" x2="301" y2="234"/>
<line x1="253" y1="326" x2="323" y2="234"/>
<line x1="275" y1="326" x2="345" y2="234"/>
</g>
<path d="M269 234.500 H217.500 V325.500 H262" fill="none" stroke="#000" stroke-width="0.9974999999999999" stroke-dasharray="8 1.5"/>
<line x1="217.5" y1="236.5" x2="269" y2="236.5" stroke="#000" stroke-width="0.875" stroke-dasharray="8 1.5"/>
<line x1="217.5" y1="323.5" x2="262" y2="323.5" stroke="#000" stroke-width="0.875" stroke-dasharray="8 1.5"/>
<line x1="220" y1="280.5" x2="269" y2="280.5" stroke="#000" stroke-width="0.9974999999999999" stroke-dasharray="11 1.5"/>
<rect x="217.6" y="279.3" width="2" height="2" fill="none" stroke="#000" stroke-width="0.7000000000000001"/>
<path d="M259 320 Q261 314.5 266.5 314.5" fill="none" stroke="#000" stroke-width="0.875"/>
<rect x="259" y="319.5" width="8" height="6.1" fill="#d5d5d5" stroke="#000" stroke-width="0.0"/>
<line x1="269.3" y1="234.5" x2="588" y2="234.5" stroke="#000" stroke-width="0.9974999999999999"/>
<line x1="269.5" y1="234.5" x2="269.5" y2="326" stroke="#000" stroke-width="1.05"/>
<line x1="271.6" y1="309" x2="271.6" y2="326" stroke="#000" stroke-width="0.7000000000000001"/>
<rect x="276.2" y="235.6" width="20.1" height="1.4" fill="none" stroke="#000" stroke-width="0.525"/>
<rect x="298.7" y="235.6" width="26.6" height="1.4" fill="none" stroke="#000" stroke-width="0.525"/>
<rect x="327.7" y="235.6" width="26.6" height="1.4" fill="none" stroke="#000" stroke-width="0.525"/>
<rect x="356.7" y="235.6" width="27.1" height="1.4" fill="none" stroke="#000" stroke-width="0.525"/>
<rect x="386.2" y="235.6" width="26.6" height="1.4" fill="none" stroke="#000" stroke-width="0.525"/>
<rect x="415.2" y="235.6" width="26.6" height="1.4" fill="none" stroke="#000" stroke-width="0.525"/>
<rect x="444.2" y="235.6" width="26.6" height="1.4" fill="none" stroke="#000" stroke-width="0.525"/>
<rect x="473.2" y="235.6" width="26.6" height="1.4" fill="none" stroke="#000" stroke-width="0.525"/>
<rect x="502.2" y="235.6" width="26.6" height="1.4" fill="none" stroke="#000" stroke-width="0.525"/>
<rect x="531.2" y="235.6" width="26.6" height="1.4" fill="none" stroke="#000" stroke-width="0.525"/>
<rect x="560.2" y="235.6" width="23.6" height="1.4" fill="none" stroke="#000" stroke-width="0.525"/>
<rect x="272.5" y="238.5" width="256" height="71" fill="none" stroke="#000" stroke-width="0.875"/>
<rect x="275.5" y="240.5" width="250" height="66" fill="none" stroke="#000" stroke-width="0.875"/>
<line x1="274.8" y1="306.2" x2="400" y2="306.2" stroke="#000" stroke-width="0.875" stroke-dasharray="14 2 5 2"/>
<line x1="274.8" y1="310.2" x2="392" y2="310.2" stroke="#000" stroke-width="0.875" stroke-dasharray="10 2.5"/>
<line x1="402" y1="306.2" x2="526" y2="306.2" stroke="#000" stroke-width="0.875" stroke-dasharray="30 2 6 2"/>
<line x1="402" y1="310.2" x2="505" y2="310.2" stroke="#000" stroke-width="0.875" stroke-dasharray="22 2.5"/>
<path d="M298 310 v1.2 h2.600 v-1.200" fill="none" stroke="#000" stroke-width="0.875"/>
<path d="M325 310 v1.2 h2.600 v-1.200" fill="none" stroke="#000" stroke-width="0.875"/>
<path d="M352 310 v1.2 h2.600 v-1.200" fill="none" stroke="#000" stroke-width="0.875"/>
<path d="M378 310 v1.2 h2.600 v-1.200" fill="none" stroke="#000" stroke-width="0.875"/>
<path d="M424 310 v1.2 h2.600 v-1.200" fill="none" stroke="#000" stroke-width="0.875"/>
<path d="M450 310 v1.2 h2.600 v-1.200" fill="none" stroke="#000" stroke-width="0.875"/>
<path d="M478 310 v1.2 h2.600 v-1.200" fill="none" stroke="#000" stroke-width="0.875"/>
<rect x="389.5" y="306" width="2.7" height="3.6" fill="none" stroke="#000" stroke-width="0.875"/>
<rect x="401.5" y="306" width="2.5" height="3.6" fill="none" stroke="#000" stroke-width="0.875"/>
<line x1="530.5" y1="238.5" x2="530.5" y2="309.5" stroke="#000" stroke-width="0.875"/>
<rect x="523.5" y="306.5" width="8" height="4.1" fill="none" stroke="#000" stroke-width="1.05"/>
<line x1="530.5" y1="238.5" x2="586" y2="238.5" stroke="#000" stroke-width="0.875"/>
<line x1="269.6" y1="326.5" x2="618.9" y2="326.5" stroke="#000" stroke-width="1.05"/>
<line x1="341.4" y1="311" x2="341.4" y2="326" stroke="#000" stroke-width="1.05"/>
<line x1="343.6" y1="311" x2="343.6" y2="326" stroke="#000" stroke-width="1.05"/>
<path d="M340.2 311 h4.600" fill="none" stroke="#000" stroke-width="0.875"/>
<line x1="456.2" y1="311" x2="456.2" y2="326" stroke="#000" stroke-width="1.05"/>
<line x1="458.4" y1="311" x2="458.4" y2="326" stroke="#000" stroke-width="1.05"/>
<path d="M455.0 311 h4.600" fill="none" stroke="#000" stroke-width="0.875"/>
<line x1="271.6" y1="311.5" x2="271.6" y2="326" stroke="#000" stroke-width="0.875"/>
<rect x="272" y="322.8" width="9" height="3" fill="none" stroke="#000" stroke-width="0.875"/>
<circle cx="269.8" cy="329.3" r="2.1" fill="#fff" stroke="#000" stroke-width="0.875"/>
<path d="M391.800 310 V324.500 H397" fill="none" stroke="#000" stroke-width="1.4000000000000001" stroke-dasharray="4 1.5"/>
<path d="M505.300 310 V320 Q513 319 515.500 310.500" fill="none" stroke="#000" stroke-width="1.05" stroke-dasharray="5 1.5"/>
<rect x="557" y="308.4" width="4" height="3.2" fill="none" stroke="#000" stroke-width="1.05"/>
<path d="M530 290.800 H576.500 V281.500 H579.500 V278.500 H585" fill="none" stroke="#000" stroke-width="1.575" stroke-dasharray="9 1.5 2.5 1.5"/>
<rect x="588.6" y="234.8" width="30.3" height="91.2" fill="#bdbdbd" stroke="#000" stroke-width="0.0"/>
<rect x="568.4" y="308.4" width="17.6" height="17.6" fill="#bdbdbd" stroke="#000" stroke-width="0.0"/>
<rect x="616.3" y="326" width="2.6" height="6.5" fill="#bdbdbd" stroke="#000" stroke-width="0.875"/>
<g clip-path="url(#c2)" stroke="#adadad" stroke-width="2.6" opacity=".55">
<line x1="548" y1="327" x2="618" y2="234"/>
<line x1="570" y1="327" x2="640" y2="234"/>
<line x1="592" y1="327" x2="662" y2="234"/>
</g>
<line x1="586.6" y1="235" x2="586.6" y2="326" stroke="#000" stroke-width="2.1" stroke-dasharray="7 1.6 2.5 1.6"/>
<line x1="589" y1="235" x2="589" y2="326" stroke="#000" stroke-width="0.7875" stroke-dasharray="6 2"/>
<line x1="618" y1="235" x2="618" y2="332.5" stroke="#000" stroke-width="2.1"/>
<line x1="618" y1="240" x2="618" y2="330" stroke="#fff" stroke-width="0.6124999999999999" stroke-dasharray="3 9"/>
<line x1="586" y1="235.6" x2="619" y2="235.6" stroke="#000" stroke-width="1.75"/>
<line x1="592" y1="235.6" x2="616" y2="235.6" stroke="#fff" stroke-width="0.525" stroke-dasharray="1.5 7"/>
<line x1="568.4" y1="308.4" x2="568.4" y2="326" stroke="#000" stroke-width="1.2249999999999999" stroke-dasharray="3 1.2"/>
<line x1="568.4" y1="308.4" x2="586" y2="308.4" stroke="#000" stroke-width="1.2249999999999999" stroke-dasharray="3 1.2"/>
<line x1="596" y1="256.3" x2="617" y2="256.3" stroke="#000" stroke-width="1.75" stroke-dasharray="6 1.5"/>
<line x1="596" y1="290.4" x2="617" y2="290.4" stroke="#000" stroke-width="1.75" stroke-dasharray="6 1.5"/>
<path d="M591 246 Q597 247 598 256" fill="none" stroke="#000" stroke-width="0.875" stroke-dasharray="3 1"/>
<path d="M591 300 Q597 299 597 291" fill="none" stroke="#000" stroke-width="0.875"/>
<path d="M577.500 307 Q578 299.500 585.500 298.500" fill="none" stroke="#000" stroke-width="0.875" stroke-dasharray="3 1"/>
<line x1="590" y1="246" x2="590" y2="257" stroke="#000" stroke-width="2.275"/>
<line x1="590" y1="291" x2="590" y2="300" stroke="#000" stroke-width="2.275"/>
<path d="M574 272.400 L615 257" fill="none" stroke="#000" stroke-width="0.7875"/>
<path d="M574 272.400 L606 277.500" fill="none" stroke="#000" stroke-width="0.7875"/>
<path d="M574 272.400 L597.500 291" fill="none" stroke="#000" stroke-width="0.7875"/>
<path d="M574 271.600 l7 -.4 l-6.500 2.600z" fill="#000" stroke="#000" stroke-width="0.35000000000000003"/>
<text x="198.4" y="247.86" font-size="3.5" text-anchor="end" textLength="36.5" lengthAdjust="spacingAndGlyphs" stroke="#000" stroke-width="0.3">REMOVE (E) SHED</text>
<text x="198.4" y="252.86" font-size="3.5" text-anchor="end" textLength="24.5" lengthAdjust="spacingAndGlyphs" stroke="#000" stroke-width="0.3">STRUCTURE</text>
<path d="M200.500 251 C207 251 212 254.500 217.500 255.800" fill="none" stroke="#000" stroke-width="0.875"/>
<text x="405.4" y="217.86" font-size="3.5" textLength="54.2" lengthAdjust="spacingAndGlyphs" stroke="#000" stroke-width="0.3">(E) CONC WALL TO REMAIN</text>
<path d="M403.500 216.600 C390 217 384 229 371 235" fill="none" stroke="#000" stroke-width="0.875"/>
<text x="405.4" y="290.86" font-size="3.5" textLength="50" lengthAdjust="spacingAndGlyphs" stroke="#000" stroke-width="0.3">(E) RIGID INSULATION TO</text>
<text x="405.4" y="295.96" font-size="3.5" textLength="25" lengthAdjust="spacingAndGlyphs" stroke="#000" stroke-width="0.3">REMAIN, TYP</text>
<path d="M403.500 289.600 C394 291 392 302 385.500 307" fill="none" stroke="#000" stroke-width="0.875"/>
<text x="572" y="264.86" font-size="3.5" text-anchor="end" textLength="38" lengthAdjust="spacingAndGlyphs" stroke="#000" stroke-width="0.3">REMOVE (E) WOOD</text>
<text x="572" y="269.86" font-size="3.5" text-anchor="end" textLength="32" lengthAdjust="spacingAndGlyphs" stroke="#000" stroke-width="0.3">FRAMED WALLS</text>
<text x="572" y="274.06" font-size="3.5" text-anchor="end" textLength="23.5" lengthAdjust="spacingAndGlyphs" stroke="#000" stroke-width="0.3">AND FLOOR</text>
<text x="618.3" y="218.77" font-size="2.7" textLength="9" lengthAdjust="spacingAndGlyphs" stroke="#000" stroke-width="0.23">NOTE:</text>
<line x1="618.3" y1="219.3" x2="627.3" y2="219.3" stroke="#000" stroke-width="0.6124999999999999"/>
<text x="618.3" y="222.57" font-size="2.7" textLength="39" lengthAdjust="spacingAndGlyphs" stroke="#000" stroke-width="0.23">FOR STRUCTURAL STEEL</text>
<text x="618.3" y="226.07" font-size="2.7" textLength="30" lengthAdjust="spacingAndGlyphs" stroke="#000" stroke-width="0.23">LAYOUT SEE METAL</text>
<text x="618.3" y="229.67" font-size="2.7" textLength="33" lengthAdjust="spacingAndGlyphs" stroke="#000" stroke-width="0.23">BUILDING DRAWINGS</text>
<text x="299.9" y="335.86" font-size="3.5" textLength="39.5" lengthAdjust="spacingAndGlyphs" stroke="#000" stroke-width="0.3">(E) CONC PILASTER</text>
<text x="299.9" y="340.96" font-size="3.5" textLength="33" lengthAdjust="spacingAndGlyphs" stroke="#000" stroke-width="0.3">TO REMAIN, TYP</text>
<path d="M341.500 340 C352 339 350 318 358.500 309.500" fill="none" stroke="#000" stroke-width="0.875"/>
<rect x="297.8" y="343.5" width="52.5" height="6.7" fill="none" stroke="#000" stroke-width="1.575" stroke-dasharray="1.1 .5" rx="2.2"/>
<text x="299.6" y="348.12" font-size="3.4" textLength="48.5" lengthAdjust="spacingAndGlyphs" stroke="#000" stroke-width="0.29">REMOVE (E) CONC WALL</text>
<path d="M351.500 351.800 l3.100 -5.600 l3.300 5.600z" fill="none" stroke="#000" stroke-width="1.05"/>
<text x="354.7" y="350.94" font-size="2.6" text-anchor="middle" stroke="#000" stroke-width="0.22">1</text>
<path d="M297.800 347.500 C284 346 281 332 272.500 326.500" fill="none" stroke="#000" stroke-width="0.875"/>
<text x="405.2" y="335.86" font-size="3.5" textLength="50.5" lengthAdjust="spacingAndGlyphs" stroke="#000" stroke-width="0.3">REMOVE PORTION OF (E)</text>
<text x="405.2" y="340.96" font-size="3.5" textLength="46.5" lengthAdjust="spacingAndGlyphs" stroke="#000" stroke-width="0.3">CONC WALL AND RIGID</text>
<text x="405.2" y="345.96" font-size="3.5" textLength="41" lengthAdjust="spacingAndGlyphs" stroke="#000" stroke-width="0.3">INSULATION FOR (N)</text>
<text x="405.2" y="350.96" font-size="3.5" textLength="29.5" lengthAdjust="spacingAndGlyphs" stroke="#000" stroke-width="0.3">OPENING, TYP</text>
<path d="M404 335 C396 334 397.500 323 402.500 309.500" fill="none" stroke="#000" stroke-width="0.875"/>
<text x="572" y="344.76" font-size="3.5" text-anchor="end" textLength="36.5" lengthAdjust="spacingAndGlyphs" stroke="#000" stroke-width="0.3">REMOVE (E) RAMP</text>
<path d="M573 343.500 C579 343 576 333 577.500 326.500" fill="none" stroke="#000" stroke-width="0.875"/>
<path d="M94.3,269.6 L106.89999999999999,279.8 L94.3,290.0 L94.3,286.3 A6.5 6.5 0 0 0 94.3,273.3z" fill="#000"/>
<circle cx="95.3" cy="279.8" r="6.5" fill="#fff" stroke="#000" stroke-width="1.2249999999999999"/>
<line x1="88.8" y1="280.1" x2="101.8" y2="280.1" stroke="#000" stroke-width="0.875"/>
<text x="95.3" y="278.76" font-size="4.6" text-anchor="middle" font-weight="normal" stroke="#000" stroke-width="0.2">2</text>
<text x="95.3" y="283.6" font-size="2.5" text-anchor="middle" textLength="8" lengthAdjust="spacingAndGlyphs" stroke="#000" stroke-width="0.21">A3.01-3</text>
<path d="M647.6,269.6 L635.0,279.8 L647.6,290.0 L647.6,286.3 A6.5 6.5 0 0 1 647.6,273.3z" fill="#000"/>
<circle cx="646.6" cy="279.8" r="6.5" fill="#fff" stroke="#000" stroke-width="1.2249999999999999"/>
<line x1="640.1" y1="280.1" x2="653.1" y2="280.1" stroke="#000" stroke-width="0.875"/>
<text x="646.6" y="278.76" font-size="4.6" text-anchor="middle" font-weight="normal" stroke="#000" stroke-width="0.2">1</text>
<text x="646.6" y="283.6" font-size="2.5" text-anchor="middle" textLength="8" lengthAdjust="spacingAndGlyphs" stroke="#000" stroke-width="0.21">A3.01-3</text>
<path d="M363.40000000000003,342.3 L373.6,329.7 L383.8,342.3 L380.1,342.3 A6.5 6.5 0 0 0 367.1,342.3z" fill="#000"/>
<circle cx="373.6" cy="341.3" r="6.5" fill="#fff" stroke="#000" stroke-width="1.2249999999999999"/>
<line x1="367.1" y1="341.6" x2="380.1" y2="341.6" stroke="#000" stroke-width="0.875"/>
<text x="373.6" y="340.26" font-size="4.6" text-anchor="middle" font-weight="normal" stroke="#000" stroke-width="0.2">3</text>
<text x="373.6" y="345.1" font-size="2.5" text-anchor="middle" textLength="8" lengthAdjust="spacingAndGlyphs" stroke="#000" stroke-width="0.21">A3.01-3</text>
<line x1="117" y1="373.3" x2="668" y2="373.3" stroke="#000" stroke-width="1.4000000000000001"/>
<circle cx="110" cy="373.3" r="6.9" fill="#fff" stroke="#000" stroke-width="1.4000000000000001"/>
<line x1="103.1" y1="373.3" x2="116.9" y2="373.3" stroke="#000" stroke-width="1.05"/>
<text x="110" y="371.93" font-size="4.8" text-anchor="middle" font-weight="normal" stroke="#000" stroke-width="0.2">2</text>
<text x="110" y="377.06" font-size="2.4" text-anchor="middle" textLength="10" lengthAdjust="spacingAndGlyphs" stroke="#000" stroke-width="0.2">A2.01-3</text>
<text x="118.9" y="371.76" font-size="4.9" textLength="145.7" lengthAdjust="spacingAndGlyphs" stroke="#000" stroke-width="0.42">BUILDING 3 - EXISTING FLOOR PLAN/DEMOLITION PLAN</text>
<text x="118.9" y="377.42" font-size="3.1" textLength="35" lengthAdjust="spacingAndGlyphs" stroke="#000" stroke-width="0.26">SCALE: 1/8" = 1'-0"</text>
<circle cx="285.9" cy="378.7" r="6.9" fill="#fff" stroke="#cc2e2a" stroke-width="0.6124999999999999"/>
<path d="M282.6 376.9h1.700l.7-1h1.800l.7 1h1.700v4.600h-6.600z" fill="#cc2e2a"/><circle cx="285.9" cy="379.2" r="1.300" fill="none" stroke="#fff" stroke-width=".5"/>
<circle cx="378.7" cy="410.6" r="6.9" fill="#fff" stroke="#cc2e2a" stroke-width="0.6124999999999999"/>
<path d="M375.4 408.8h1.700l.7-1h1.800l.7 1h1.700v4.600h-6.600z" fill="#cc2e2a"/><circle cx="378.7" cy="411.1" r="1.300" fill="none" stroke="#fff" stroke-width=".5"/>
<circle cx="312.5" cy="376.9" r="4.6" fill="#f3c6c6" stroke="#000" stroke-width="0.0"/>
<text x="322" y="378.82" font-size="3.4" textLength="16.5" lengthAdjust="spacingAndGlyphs" fill="#cc2e2a" stroke="#cc2e2a" stroke-width="0.29">A-1.01b</text>
<circle cx="355.7" cy="380.8" r="6.9" fill="#fff" stroke="#cc2e2a" stroke-width="0.6124999999999999"/>
<path d="M353.400 378.400h4.600v5.400h-4.600z" fill="#cc2e2a"/><rect x="354.600" y="377.500" width="2.200" height="1.400" fill="#cc2e2a"/><path d="M354.200 380.500h3M354.200 382h3" stroke="#fff" stroke-width=".45"/>
<text x="365" y="382.3" font-size="3.6" textLength="32.5" lengthAdjust="spacingAndGlyphs" fill="#cc2e2a" stroke="#cc2e2a" stroke-width="0.31">Daily Report #7</text>
<circle cx="116.7" cy="411.4" r="4.6" fill="#fff" stroke="#cc2e2a" stroke-width="0.9625000000000001"/>
<text x="116.7" y="412.47" font-size="2.7" text-anchor="middle" font-weight="normal" fill="#cc2e2a" stroke="#cc2e2a" stroke-width="0.12">Q.9</text>
<circle cx="138.5" cy="411.4" r="4.6" fill="#fff" stroke="#2c5a98" stroke-width="0.9625000000000001"/>
<text x="138.5" y="412.8" font-size="3.6" text-anchor="middle" font-weight="normal" fill="#2c5a98" stroke="#2c5a98" stroke-width="0.12">R</text>
<circle cx="200.4" cy="411.4" r="4.6" fill="#fff" stroke="#2c5a98" stroke-width="0.9625000000000001"/>
<text x="200.4" y="412.8" font-size="3.6" text-anchor="middle" font-weight="normal" fill="#2c5a98" stroke="#2c5a98" stroke-width="0.12">S</text>
<circle cx="247.8" cy="411.4" r="4.6" fill="#fff" stroke="#2c5a98" stroke-width="0.9625000000000001"/>
<text x="247.8" y="412.8" font-size="3.6" text-anchor="middle" font-weight="normal" fill="#2c5a98" stroke="#2c5a98" stroke-width="0.12">T</text>
<circle cx="267.1" cy="411.4" r="4.6" fill="#fff" stroke="#cc2e2a" stroke-width="0.9625000000000001"/>
<text x="267.1" y="412.47" font-size="2.7" text-anchor="middle" font-weight="normal" fill="#cc2e2a" stroke="#cc2e2a" stroke-width="0.12">T.8</text>
<circle cx="286.4" cy="411.4" r="4.6" fill="#fff" stroke="#cc2e2a" stroke-width="0.9625000000000001"/>
<text x="286.4" y="412.8" font-size="3.6" text-anchor="middle" font-weight="normal" fill="#cc2e2a" stroke="#cc2e2a" stroke-width="0.12">U</text>
<circle cx="355.5" cy="411.4" r="4.6" fill="#fff" stroke="#6f6f6f" stroke-width="0.9625000000000001"/>
<text x="355.5" y="412.8" font-size="3.6" text-anchor="middle" font-weight="normal" fill="#6f6f6f" stroke="#6f6f6f" stroke-width="0.12">V</text>
<circle cx="442.3" cy="411.4" r="4.6" fill="#fff" stroke="#6f6f6f" stroke-width="0.9625000000000001"/>
<text x="442.3" y="412.8" font-size="3.6" text-anchor="middle" font-weight="normal" fill="#6f6f6f" stroke="#6f6f6f" stroke-width="0.12">W</text>
<circle cx="529.3" cy="411.4" r="4.6" fill="#fff" stroke="#6f6f6f" stroke-width="0.9625000000000001"/>
<text x="529.3" y="412.8" font-size="3.6" text-anchor="middle" font-weight="normal" fill="#6f6f6f" stroke="#6f6f6f" stroke-width="0.12">X</text>
<circle cx="618.5" cy="403.2" r="4.6" fill="#fff" stroke="#cc2e2a" stroke-width="0.9625000000000001"/>
<text x="618.5" y="404.6" font-size="3.6" text-anchor="middle" font-weight="normal" fill="#cc2e2a" stroke="#cc2e2a" stroke-width="0.12">Y</text>
<circle cx="96.5" cy="493.3" r="4.6" fill="#fff" stroke="#cc2e2a" stroke-width="0.9625000000000001"/>
<text x="96.5" y="494.7" font-size="3.6" text-anchor="middle" font-weight="normal" fill="#cc2e2a" stroke="#cc2e2a" stroke-width="0.12">8</text>
<circle cx="96.5" cy="585.3" r="4.6" fill="#fff" stroke="#cc2e2a" stroke-width="0.9625000000000001"/>
<text x="96.5" y="586.7" font-size="3.6" text-anchor="middle" font-weight="normal" fill="#cc2e2a" stroke="#cc2e2a" stroke-width="0.12">9</text>
<path d="M116.700 416 V420 L134 439 V494" fill="none" stroke="#cc2e2a" stroke-width="0.9625000000000001"/>
<line x1="138.5" y1="416" x2="138.5" y2="613" stroke="#2c5a98" stroke-width="0.9625000000000001" stroke-dasharray="14 1.5 2 1.5"/>
<line x1="200.4" y1="416" x2="200.4" y2="494" stroke="#2c5a98" stroke-width="0.9625000000000001" stroke-dasharray="14 1.5 2 1.5"/>
<path d="M247.800 416 V431 L262.500 446 V494" fill="none" stroke="#2c5a98" stroke-width="0.9625000000000001"/>
<line x1="267.1" y1="416" x2="267.1" y2="494" stroke="#cc2e2a" stroke-width="0.9625000000000001" stroke-dasharray="14 1.5 2 1.5"/>
<path d="M286.400 416 V445 L268.500 462 V494" fill="none" stroke="#cc2e2a" stroke-width="0.9625000000000001"/>
<line x1="355.5" y1="416" x2="355.5" y2="500" stroke="#555" stroke-width="0.7875" stroke-dasharray="16 1.5 2 1.5"/>
<line x1="442.3" y1="416" x2="442.3" y2="500" stroke="#555" stroke-width="0.7875" stroke-dasharray="16 1.5 2 1.5"/>
<line x1="529.3" y1="416" x2="529.3" y2="500" stroke="#555" stroke-width="0.7875" stroke-dasharray="16 1.5 2 1.5"/>
<line x1="618.5" y1="408" x2="618.5" y2="577" stroke="#cc2e2a" stroke-width="1.2249999999999999" stroke-dasharray="9 1.5 2 1.5"/>
<text transform="translate(132.3,462.08) rotate(-90)" font-size="3" textLength="14" lengthAdjust="spacingAndGlyphs" fill="#cc2e2a" stroke="#cc2e2a" stroke-width="0.26">F.O. GIRT</text>
<text transform="translate(265.8,444.01) rotate(-90)" font-size="2.8" textLength="13" lengthAdjust="spacingAndGlyphs" fill="#cc2e2a" stroke="#cc2e2a" stroke-width="0.24">F.O.GIRT</text>
<text transform="translate(285,442.01) rotate(-90)" font-size="2.8" textLength="14" lengthAdjust="spacingAndGlyphs" fill="#cc2e2a" stroke="#cc2e2a" stroke-width="0.24">F.O.SLAB</text>
<text transform="translate(620.3,425.01) rotate(-90)" font-size="2.8" textLength="15" lengthAdjust="spacingAndGlyphs" fill="#cc2e2a" stroke="#cc2e2a" stroke-width="0.24">F.O. SLAB</text>
<line x1="105" y1="493.3" x2="268" y2="493.3" stroke="#cc2e2a" stroke-width="0.9625000000000001"/>
<line x1="105" y1="585.3" x2="268" y2="585.3" stroke="#cc2e2a" stroke-width="0.9625000000000001"/>
<text x="105.5" y="492.28" font-size="3" textLength="18" lengthAdjust="spacingAndGlyphs" fill="#cc2e2a" stroke="#cc2e2a" stroke-width="0.26">F.O. GIRT</text>
<text x="105.5" y="584.48" font-size="3" textLength="18" lengthAdjust="spacingAndGlyphs" fill="#cc2e2a" stroke="#cc2e2a" stroke-width="0.26">F.O. GIRT</text>
<line x1="589.4" y1="451" x2="634.8" y2="451" stroke="#cc2e2a" stroke-width="1.2249999999999999"/>
<path d="M613.500 497.500 L621 507 M621 497.500 L613.500 507" fill="none" stroke="#cc2e2a" stroke-width="1.05"/>
<line x1="131" y1="469.6" x2="618" y2="469.6" stroke="#000" stroke-width="1.05"/>
<line x1="131" y1="478.4" x2="618" y2="478.4" stroke="#000" stroke-width="1.05"/>
<rect x="131.5" y="469.6" width="136.3" height="9.3" fill="none" stroke="#000" stroke-width="1.05" stroke-dasharray="1.1 .45" rx="2"/>
<path d="M137.4 479.4l2.200 -2.200" fill="none" stroke="#000" stroke-width="1.2249999999999999"/>
<path d="M199.3 479.4l2.200 -2.200" fill="none" stroke="#000" stroke-width="1.2249999999999999"/>
<path d="M261.3 479.4l2.200 -2.200" fill="none" stroke="#000" stroke-width="1.2249999999999999"/>
<path d="M266 479.4l2.200 -2.200" fill="none" stroke="#000" stroke-width="1.2249999999999999"/>
<path d="M354.4 479.4l2.200 -2.200" fill="none" stroke="#000" stroke-width="1.2249999999999999"/>
<path d="M441.2 479.4l2.200 -2.200" fill="none" stroke="#000" stroke-width="1.2249999999999999"/>
<path d="M528.2 479.4l2.200 -2.200" fill="none" stroke="#000" stroke-width="1.2249999999999999"/>
<path d="M616.9 479.4l2.200 -2.200" fill="none" stroke="#000" stroke-width="1.2249999999999999"/>
<path d="M132.4 470.7l2.200 -2.200" fill="none" stroke="#000" stroke-width="1.2249999999999999"/>
<path d="M266 470.7l2.200 -2.200" fill="none" stroke="#000" stroke-width="1.2249999999999999"/>
<path d="M616.9 470.7l2.200 -2.200" fill="none" stroke="#000" stroke-width="1.2249999999999999"/>
<path d="M123.2 474.8L126.4 469.2L129.6 474.8z" fill="#fff" stroke="#000" stroke-width="1.05"/>
<text x="126.4" y="473.96" font-size="2.4" text-anchor="middle" stroke="#000" stroke-width="0.2">1</text>
<text x="142.5" y="475.52" font-size="3.1" text-anchor="middle" textLength="14" lengthAdjust="spacingAndGlyphs" stroke="#000" stroke-width="0.26">1'-7 1/2"</text>
<text x="169.5" y="475.52" font-size="3.1" text-anchor="middle" textLength="17.5" lengthAdjust="spacingAndGlyphs" stroke="#000" stroke-width="0.26">27'-4 1/2"</text>
<text x="231.3" y="475.52" font-size="3.1" text-anchor="middle" textLength="17.5" lengthAdjust="spacingAndGlyphs" stroke="#000" stroke-width="0.26">27'-4 1/2"</text>
<text x="258.8" y="475.52" font-size="3.1" text-anchor="middle" textLength="13.5" lengthAdjust="spacingAndGlyphs" stroke="#000" stroke-width="0.26">1'-7 1/2"</text>
<text x="202" y="466.62" font-size="3.1" text-anchor="middle" textLength="24" lengthAdjust="spacingAndGlyphs" stroke="#000" stroke-width="0.26">48'-0" (NEW)</text>
<text x="268.3" y="466.62" font-size="3.1" text-anchor="middle" textLength="17.5" lengthAdjust="spacingAndGlyphs" stroke="#000" stroke-width="0.26">1'-0" GAP</text>
<text x="312.5" y="475.52" font-size="3.1" text-anchor="middle" textLength="25" lengthAdjust="spacingAndGlyphs" stroke="#000" stroke-width="0.26">29'-7 1/2" VIF</text>
<text x="398.5" y="475.52" font-size="3.1" text-anchor="middle" textLength="27" lengthAdjust="spacingAndGlyphs" stroke="#000" stroke-width="0.26">29'-11 1/2" VIF</text>
<text x="485.5" y="475.52" font-size="3.1" text-anchor="middle" textLength="25" lengthAdjust="spacingAndGlyphs" stroke="#000" stroke-width="0.26">30'-0 1/2" VIF</text>
<text x="573.5" y="475.52" font-size="3.1" text-anchor="middle" textLength="27" lengthAdjust="spacingAndGlyphs" stroke="#000" stroke-width="0.26">30'-10 1/2" VIF</text>
<text x="427.2" y="466.62" font-size="3.1" text-anchor="middle" textLength="48.7" lengthAdjust="spacingAndGlyphs" stroke="#000" stroke-width="0.26">132'-6" VIF (REMODELED)</text>
<line x1="116.3" y1="493.3" x2="116.3" y2="585.3" stroke="#000" stroke-width="1.05"/>
<text transform="translate(113.2,541.12) rotate(-90)" font-size="3.1" text-anchor="middle" textLength="12" lengthAdjust="spacingAndGlyphs" stroke="#000" stroke-width="0.26">27'-6"</text>
<path d="M115.2 494.4l2.200 -2.200" fill="none" stroke="#000" stroke-width="1.2249999999999999"/>
<path d="M115.2 586.4l2.200 -2.200" fill="none" stroke="#000" stroke-width="1.2249999999999999"/>
<rect x="133.6" y="494" width="133.7" height="2.6" fill="#000" stroke="#000" stroke-width="0.0"/>
<rect x="134" y="496.6" width="2.8" height="89" fill="#a9a9a9" stroke="#000" stroke-width="0.875"/>
<rect x="264" y="496.6" width="2.8" height="89" fill="#a9a9a9" stroke="#000" stroke-width="0.875"/>
<line x1="133.1" y1="439" x2="133.1" y2="600" stroke="#cc2e2a" stroke-width="0.9625000000000001"/>
<line x1="267.6" y1="462" x2="267.6" y2="600" stroke="#cc2e2a" stroke-width="1.575"/>
<line x1="266.3" y1="494" x2="266.3" y2="600" stroke="#7a1512" stroke-width="0.7875"/>
<line x1="200.4" y1="494" x2="200.4" y2="613" stroke="#2c5a98" stroke-width="0.875" stroke-dasharray="14 1.5 2 1.5"/>
<rect x="199.2" y="496.6" width="2.4" height="88.4" fill="#141c2e" stroke="#000" stroke-width="0.0"/>
<line x1="262.4" y1="462" x2="262.4" y2="613" stroke="#2c5a98" stroke-width="0.875" stroke-dasharray="14 1.5 2 1.5"/>
<rect x="134" y="583.4" width="40.5" height="2.2" fill="#a9a9a9" stroke="#000" stroke-width="0.7875"/>
<rect x="183" y="583.4" width="33.5" height="2.2" fill="#a9a9a9" stroke="#000" stroke-width="0.7875"/>
<rect x="226" y="583.4" width="40.8" height="2.2" fill="#a9a9a9" stroke="#000" stroke-width="0.7875"/>
<rect x="146.5" y="582.6" width="28" height="1.4" fill="#fff" stroke="#000" stroke-width="0.7000000000000001"/>
<rect x="183" y="582.6" width="7" height="1.4" fill="#fff" stroke="#000" stroke-width="0.7000000000000001"/>
<rect x="192.5" y="582.6" width="15" height="1.4" fill="#fff" stroke="#000" stroke-width="0.7000000000000001"/>
<rect x="209.5" y="582.6" width="7" height="1.4" fill="#fff" stroke="#000" stroke-width="0.7000000000000001"/>
<rect x="226" y="582.6" width="27" height="1.4" fill="#fff" stroke="#000" stroke-width="0.7000000000000001"/>
<line x1="133.6" y1="585.4" x2="267.3" y2="585.4" stroke="#cc2e2a" stroke-width="0.875"/>
<path d="M174.600 585.600 V593.500 Q181.500 593 182.800 585.800" fill="none" stroke="#000" stroke-width="0.9625000000000001"/>
<path d="M226 585.600 V593.500 Q219 593 217.700 585.800" fill="none" stroke="#000" stroke-width="0.9625000000000001"/>
<line x1="178" y1="597.3" x2="236" y2="597.3" stroke="#000" stroke-width="1.05"/>
<text x="184" y="596.24" font-size="2.6" text-anchor="middle" stroke="#000" stroke-width="0.22">3'-0"</text>
<text x="219" y="596.24" font-size="2.6" text-anchor="middle" stroke="#000" stroke-width="0.22">3'-0"</text>
<line x1="192.5" y1="586" x2="192.5" y2="598.5" stroke="#000" stroke-width="0.875"/>
<line x1="207.5" y1="586" x2="207.5" y2="598.5" stroke="#000" stroke-width="0.875"/>
<line x1="133.5" y1="586" x2="133.5" y2="613" stroke="#000" stroke-width="1.4000000000000001" stroke-dasharray="7 2"/>
<line x1="138.5" y1="586" x2="138.5" y2="613" stroke="#000" stroke-width="1.4000000000000001" stroke-dasharray="7 2"/>
<line x1="198.8" y1="586" x2="198.8" y2="613" stroke="#000" stroke-width="1.4000000000000001" stroke-dasharray="7 2"/>
<line x1="201.8" y1="586" x2="201.8" y2="613" stroke="#000" stroke-width="1.4000000000000001" stroke-dasharray="7 2"/>
<line x1="262.4" y1="586" x2="262.4" y2="613" stroke="#000" stroke-width="1.4000000000000001" stroke-dasharray="7 2"/>
<line x1="267.1" y1="586" x2="267.1" y2="613" stroke="#000" stroke-width="1.4000000000000001" stroke-dasharray="7 2"/>
<circle cx="149.5" cy="589.8" r="2.6" fill="none" stroke="#000" stroke-width="0.9625000000000001"/>
<circle cx="149.5" cy="589.8" r="1.2" fill="none" stroke="#000" stroke-width="0.7875"/>
<rect x="145.9" y="586.2" width="7.2" height="7.2" fill="none" stroke="#000" stroke-width="0.7875"/>
<circle cx="252" cy="589.8" r="2.6" fill="none" stroke="#000" stroke-width="0.9625000000000001"/>
<circle cx="252" cy="589.8" r="1.2" fill="none" stroke="#000" stroke-width="0.7875"/>
<rect x="248.4" y="586.2" width="7.2" height="7.2" fill="none" stroke="#000" stroke-width="0.7875"/>
<path d="M151.3 599.4L154.5 593.8L157.7 599.4z" fill="#fff" stroke="#000" stroke-width="1.05"/>
<text x="154.5" y="598.56" font-size="2.4" text-anchor="middle" stroke="#000" stroke-width="0.2">1</text>
<path d="M242.3 597.1L245.5 591.5L248.7 597.1z" fill="#fff" stroke="#000" stroke-width="1.05"/>
<text x="245.5" y="596.26" font-size="2.4" text-anchor="middle" stroke="#000" stroke-width="0.2">1</text>
<text x="169.6" y="525.18" font-size="4.4" text-anchor="middle" font-weight="normal" fill="#0c1220" stroke="#0c1220" stroke-width="0.22">FIFTH</text>
<text x="169.6" y="529.48" font-size="4.4" text-anchor="middle" font-weight="normal" fill="#0c1220" stroke="#0c1220" stroke-width="0.22">GRADE</text>
<text x="234.8" y="525.18" font-size="4.4" text-anchor="middle" font-weight="normal" fill="#0c1220" stroke="#0c1220" stroke-width="0.22">FIFTH</text>
<text x="234.8" y="529.48" font-size="4.4" text-anchor="middle" font-weight="normal" fill="#0c1220" stroke="#0c1220" stroke-width="0.22">GRADE</text>
<rect x="161.55" y="531.2" width="15.7" height="4.3" fill="#fff" stroke="#000" stroke-width="1.05"/>
<rect x="161.55" y="535.5" width="15.7" height="4.3" fill="#fff" stroke="#000" stroke-width="1.05"/>
<text x="169.4" y="534.35" font-size="2.5" text-anchor="middle" stroke="#000" stroke-width="0.21">3-101</text>
<text x="169.4" y="538.6" font-size="2.5" text-anchor="middle" stroke="#000" stroke-width="0.21">902 SF</text>
<rect x="226.65" y="531.2" width="15.7" height="4.3" fill="#fff" stroke="#000" stroke-width="1.05"/>
<rect x="226.65" y="535.5" width="15.7" height="4.3" fill="#fff" stroke="#000" stroke-width="1.05"/>
<text x="234.5" y="534.35" font-size="2.5" text-anchor="middle" stroke="#000" stroke-width="0.21">3-102</text>
<text x="234.5" y="538.6" font-size="2.5" text-anchor="middle" stroke="#000" stroke-width="0.21">902 SF</text>
<path d="M165.4 552L172.5 544.9L179.6 552L172.5 559.1z" fill="#000" stroke="#000" stroke-width="0.0"/>
<line x1="162.5" y1="552" x2="182.5" y2="552" stroke="#000" stroke-width="1.2249999999999999"/>
<line x1="172.5" y1="543.7" x2="172.5" y2="560.3" stroke="#000" stroke-width="1.05"/>
<circle cx="172.5" cy="552" r="3.7" fill="#fff" stroke="#000" stroke-width="0.35000000000000003"/>
<line x1="168.8" y1="552.2" x2="176.2" y2="552.2" stroke="#000" stroke-width="0.7875"/>
<text x="172.5" y="551.34" font-size="2.9" text-anchor="middle" font-weight="normal">1</text>
<text x="172.5" y="554.65" font-size="1.8" text-anchor="middle" stroke="#000" stroke-width="0.15">A4.01</text>
<text x="172.5" y="542.53" font-size="2.3" text-anchor="middle" fill="#23406b" stroke="#23406b" stroke-width="0.2">N</text>
<text x="172.5" y="563.13" font-size="2.3" text-anchor="middle" fill="#23406b" stroke="#23406b" stroke-width="0.2">S</text>
<path d="M142.9 561L146 557.9L149.1 561L146 564.1z" fill="#fff" stroke="#000" stroke-width="0.9625000000000001"/>
<text x="146" y="561.93" font-size="2.3" text-anchor="middle" font-weight="normal">A</text>
<path d="M207.4 561L210.5 557.9L213.6 561L210.5 564.1z" fill="#fff" stroke="#000" stroke-width="0.9625000000000001"/>
<text x="210.5" y="561.93" font-size="2.3" text-anchor="middle" font-weight="normal">A</text>
<path d="M252.4 561L255.5 557.9L258.6 561L255.5 564.1z" fill="#fff" stroke="#000" stroke-width="0.9625000000000001"/>
<text x="255.5" y="561.93" font-size="2.3" text-anchor="middle" font-weight="normal">A</text>
<path d="M255.2 483.5L258.3 480.4L261.4 483.5L258.3 486.6z" fill="#fff" stroke="#000" stroke-width="0.9625000000000001"/>
<text x="258.3" y="484.43" font-size="2.3" text-anchor="middle" font-weight="normal">A</text>
<line x1="136.8" y1="561" x2="143" y2="561" stroke="#000" stroke-width="0.875"/>
<line x1="201.5" y1="561" x2="207.4" y2="561" stroke="#000" stroke-width="0.875"/>
<line x1="258.6" y1="561" x2="264" y2="561" stroke="#000" stroke-width="0.875"/>
<path d="M255.200 483.500 H251 V494" fill="none" stroke="#000" stroke-width="0.875"/>
<rect x="176.3" y="574.7" width="13.5" height="5.7" fill="#fff" stroke="#000" stroke-width="1.05"/>
<text x="183" y="578.5" font-size="2.5" text-anchor="middle" stroke="#000" stroke-width="0.21">3-101A</text>
<rect x="215.5" y="574.7" width="13.5" height="5.7" fill="#fff" stroke="#000" stroke-width="1.05"/>
<text x="222.2" y="578.5" font-size="2.5" text-anchor="middle" stroke="#000" stroke-width="0.21">3-102A</text>
<text x="216.3" y="568.48" font-size="3" textLength="17.2" lengthAdjust="spacingAndGlyphs" stroke="#000" stroke-width="0.26">FF=11.10</text>
<text x="157.8" y="453.26" font-size="3.5" textLength="36.5" lengthAdjust="spacingAndGlyphs" stroke="#000" stroke-width="0.3">1-HR RATED WALL</text>
<text x="157.8" y="458.46" font-size="3.5" textLength="38.5" lengthAdjust="spacingAndGlyphs" stroke="#000" stroke-width="0.3">SHOWN SOLID, TYP</text>
<path d="M156.500 452 C146 452 151 478 156 492.500" fill="none" stroke="#000" stroke-width="0.875"/>
<rect x="217" y="447" width="27.6" height="11.6" fill="none" stroke="#000" stroke-width="1.05" stroke-dasharray="1.1 .45" rx="2"/>
<text x="230.8" y="454.09" font-size="3.3" text-anchor="middle" textLength="19" lengthAdjust="spacingAndGlyphs" stroke="#000" stroke-width="0.28">MTL BLDG</text>
<path d="M243.8 461.2L247 455.6L250.2 461.2z" fill="#fff" stroke="#000" stroke-width="1.05"/>
<text x="247" y="460.36" font-size="2.4" text-anchor="middle" stroke="#000" stroke-width="0.2">1</text>
<path d="M217 452.500 C209 453 218 480 224 492.500" fill="none" stroke="#000" stroke-width="0.875"/>
<rect x="292.8" y="445" width="32.8" height="14" fill="none" stroke="#000" stroke-width="1.05" stroke-dasharray="1.1 .45" rx="2"/>
<text x="309.2" y="453.29" font-size="3.3" text-anchor="middle" textLength="27" lengthAdjust="spacingAndGlyphs" stroke="#000" stroke-width="0.28">OPEN TO SKY</text>
<path d="M324.8 462.6L328 457L331.2 462.6z" fill="#fff" stroke="#000" stroke-width="1.05"/>
<text x="328" y="461.76" font-size="2.4" text-anchor="middle" stroke="#000" stroke-width="0.2">1</text>
<path d="M292.800 452 C280 452 276 472 268.500 478" fill="none" stroke="#000" stroke-width="0.875"/>
<text x="166.3" y="611.76" font-size="3.5" textLength="42.5" lengthAdjust="spacingAndGlyphs" stroke="#000" stroke-width="0.3">(N) PRE-ENGINEERED</text>
<text x="166.3" y="615.96" font-size="3.5" textLength="24.5" lengthAdjust="spacingAndGlyphs" stroke="#000" stroke-width="0.3">METAL BLDG</text>
<path d="M165 610.500 C158 610 159.500 596 162.500 586" fill="none" stroke="#000" stroke-width="0.875"/>
<rect x="157.1" y="620.1" width="17" height="6" fill="#fff" stroke="#000" stroke-width="1.2249999999999999" rx="3.0"/>
<text x="165.6" y="624.39" font-size="3.3" text-anchor="middle" stroke="#000" stroke-width="0.28">5.03</text>
<path d="M157.100 623 C143 622 142.500 600 138.800 586.500" fill="none" stroke="#000" stroke-width="0.875"/>
<path d="M95.2,553.8 L107.8,564 L95.2,574.2 L95.2,570.5 A6.5 6.5 0 0 0 95.2,557.5z" fill="#000"/>
<circle cx="96.2" cy="564" r="6.5" fill="#fff" stroke="#000" stroke-width="1.2249999999999999"/>
<line x1="89.7" y1="564.3" x2="102.7" y2="564.3" stroke="#000" stroke-width="0.875"/>
<text x="96.2" y="562.96" font-size="4.6" text-anchor="middle" font-weight="normal" stroke="#000" stroke-width="0.2">2</text>
<text x="96.2" y="567.8" font-size="2.5" text-anchor="middle" textLength="8" lengthAdjust="spacingAndGlyphs" stroke="#000" stroke-width="0.21">A3.01-3</text>
<circle cx="212.8" cy="515.8" r="6.9" fill="#fff" stroke="#cc2e2a" stroke-width="0.6124999999999999"/>
<path d="M209.5 514h1.700l.7-1h1.800l.7 1h1.700v4.600h-6.600z" fill="#cc2e2a"/><circle cx="212.8" cy="516.3" r="1.300" fill="none" stroke="#fff" stroke-width=".5"/>
<path d="M219.700 525.500 L219.700 538.800 L222.800 536 L225 541.200 L227.200 540.200 L225 535.200 L229.200 535 z" fill="#000" stroke="#fff" stroke-width="0.7875"/>
<line x1="271" y1="494.2" x2="618" y2="494.2" stroke="#000" stroke-width="2.275"/>
<line x1="271" y1="495.9" x2="618" y2="495.9" stroke="#000" stroke-width="0.875"/>
<rect x="273.3" y="497.6" width="81.3" height="67.7" fill="none" stroke="#000" stroke-width="0.9625000000000001"/>
<rect x="274.6" y="498.9" width="78.8" height="65.1" fill="none" stroke="#000" stroke-width="0.9625000000000001"/>
<line x1="271.2" y1="494.2" x2="271.2" y2="590" stroke="#000" stroke-width="1.575"/>
<rect x="354.6" y="497.6" width="1.8" height="68.4" fill="#fff" stroke="#000" stroke-width="0.875"/>
<rect x="441.3" y="496.5" width="2.2" height="70.5" fill="#000" stroke="#000" stroke-width="0.0"/>
<line x1="526.6" y1="497" x2="526.6" y2="566" stroke="#000" stroke-width="1.05"/>
<line x1="529.4" y1="497" x2="529.4" y2="566" stroke="#000" stroke-width="1.05"/>
<line x1="356.4" y1="498.2" x2="526.6" y2="498.2" stroke="#000" stroke-width="1.05"/>
<line x1="529.4" y1="498.2" x2="616.5" y2="498.2" stroke="#000" stroke-width="1.05"/>
<line x1="524.8" y1="498.2" x2="524.8" y2="564.8" stroke="#000" stroke-width="0.875"/>
<line x1="443.5" y1="564.8" x2="524.8" y2="564.8" stroke="#000" stroke-width="0.875"/>
<line x1="616.6" y1="495" x2="616.6" y2="568" stroke="#000" stroke-width="1.575"/>
<line x1="618.2" y1="495" x2="618.2" y2="584" stroke="#000" stroke-width="0.875"/>
<path d="M357 513.500 L441 507" fill="none" stroke="#000" stroke-width="0.875"/>
<line x1="356" y1="565.2" x2="616.6" y2="565.2" stroke="#000" stroke-width="0.875"/>
<line x1="271.2" y1="568" x2="618" y2="568" stroke="#000" stroke-width="2.1"/>
<rect x="358" y="565.6" width="26" height="1.8" fill="#fff" stroke="#000" stroke-width="0.7000000000000001"/>
<rect x="386" y="565.6" width="14" height="1.8" fill="#fff" stroke="#000" stroke-width="0.7000000000000001"/>
<rect x="460" y="565.6" width="14.5" height="1.8" fill="#fff" stroke="#000" stroke-width="0.7000000000000001"/>
<rect x="493" y="565.6" width="31" height="1.8" fill="#fff" stroke="#000" stroke-width="0.7000000000000001"/>
<rect x="531" y="565.6" width="40" height="1.8" fill="#fff" stroke="#000" stroke-width="0.7000000000000001"/>
<rect x="584" y="565.6" width="28" height="1.8" fill="#fff" stroke="#000" stroke-width="0.7000000000000001"/>
<path d="M303.500 566 V558.500 L305.300 558.500 V566" fill="#000" stroke="#000" stroke-width="1.05"/>
<path d="M305.300 558.500 Q311.500 559.500 312 567" fill="none" stroke="#000" stroke-width="0.875"/>
<path d="M400.500 567 Q401 558.500 407 558 V567" fill="none" stroke="#000" stroke-width="0.9625000000000001"/>
<path d="M478.500 567 V558 Q485 559 486 567" fill="none" stroke="#000" stroke-width="0.9625000000000001"/>
<path d="M573.500 567 Q574 558.500 580.500 558 V567" fill="none" stroke="#000" stroke-width="0.9625000000000001"/>
<line x1="581.5" y1="558" x2="581.5" y2="567" stroke="#000" stroke-width="1.05"/>
<line x1="271.2" y1="584" x2="618" y2="584" stroke="#000" stroke-width="2.625"/>
<line x1="324.8" y1="569.5" x2="324.8" y2="583.5" stroke="#000" stroke-width="0.9625000000000001" stroke-dasharray="7 1.5"/>
<line x1="327" y1="569.5" x2="327" y2="583.5" stroke="#000" stroke-width="0.9625000000000001" stroke-dasharray="7 1.5"/>
<rect x="324.1" y="567.2" width="3.6" height="2.6" fill="#fff" stroke="#000" stroke-width="0.875"/>
<line x1="354.3" y1="569.5" x2="354.3" y2="583.5" stroke="#000" stroke-width="0.9625000000000001" stroke-dasharray="7 1.5"/>
<line x1="356.5" y1="569.5" x2="356.5" y2="583.5" stroke="#000" stroke-width="0.9625000000000001" stroke-dasharray="7 1.5"/>
<rect x="353.6" y="567.2" width="3.6" height="2.6" fill="#fff" stroke="#000" stroke-width="0.875"/>
<line x1="383.7" y1="569.5" x2="383.7" y2="583.5" stroke="#000" stroke-width="0.9625000000000001" stroke-dasharray="7 1.5"/>
<line x1="385.9" y1="569.5" x2="385.9" y2="583.5" stroke="#000" stroke-width="0.9625000000000001" stroke-dasharray="7 1.5"/>
<rect x="383" y="567.2" width="3.6" height="2.6" fill="#fff" stroke="#000" stroke-width="0.875"/>
<line x1="412.1" y1="569.5" x2="412.1" y2="583.5" stroke="#000" stroke-width="0.9625000000000001" stroke-dasharray="7 1.5"/>
<line x1="414.3" y1="569.5" x2="414.3" y2="583.5" stroke="#000" stroke-width="0.9625000000000001" stroke-dasharray="7 1.5"/>
<rect x="411.4" y="567.2" width="3.6" height="2.6" fill="#fff" stroke="#000" stroke-width="0.875"/>
<line x1="441.6" y1="569.5" x2="441.6" y2="583.5" stroke="#000" stroke-width="0.9625000000000001" stroke-dasharray="7 1.5"/>
<line x1="443.8" y1="569.5" x2="443.8" y2="583.5" stroke="#000" stroke-width="0.9625000000000001" stroke-dasharray="7 1.5"/>
<rect x="440.9" y="567.2" width="3.6" height="2.6" fill="#fff" stroke="#000" stroke-width="0.875"/>
<line x1="470.4" y1="569.5" x2="470.4" y2="583.5" stroke="#000" stroke-width="0.9625000000000001" stroke-dasharray="7 1.5"/>
<line x1="472.6" y1="569.5" x2="472.6" y2="583.5" stroke="#000" stroke-width="0.9625000000000001" stroke-dasharray="7 1.5"/>
<rect x="469.7" y="567.2" width="3.6" height="2.6" fill="#fff" stroke="#000" stroke-width="0.875"/>
<line x1="499.4" y1="569.5" x2="499.4" y2="583.5" stroke="#000" stroke-width="0.9625000000000001" stroke-dasharray="7 1.5"/>
<line x1="501.6" y1="569.5" x2="501.6" y2="583.5" stroke="#000" stroke-width="0.9625000000000001" stroke-dasharray="7 1.5"/>
<rect x="498.7" y="567.2" width="3.6" height="2.6" fill="#fff" stroke="#000" stroke-width="0.875"/>
<line x1="528.7" y1="569.5" x2="528.7" y2="583.5" stroke="#000" stroke-width="0.9625000000000001" stroke-dasharray="7 1.5"/>
<line x1="530.9" y1="569.5" x2="530.9" y2="583.5" stroke="#000" stroke-width="0.9625000000000001" stroke-dasharray="7 1.5"/>
<rect x="528" y="567.2" width="3.6" height="2.6" fill="#fff" stroke="#000" stroke-width="0.875"/>
<line x1="557.4" y1="569.5" x2="557.4" y2="583.5" stroke="#000" stroke-width="0.9625000000000001" stroke-dasharray="7 1.5"/>
<line x1="559.6" y1="569.5" x2="559.6" y2="583.5" stroke="#000" stroke-width="0.9625000000000001" stroke-dasharray="7 1.5"/>
<rect x="556.7" y="567.2" width="3.6" height="2.6" fill="#fff" stroke="#000" stroke-width="0.875"/>
<line x1="585.9" y1="569.5" x2="585.9" y2="583.5" stroke="#000" stroke-width="0.9625000000000001" stroke-dasharray="7 1.5"/>
<line x1="588.1" y1="569.5" x2="588.1" y2="583.5" stroke="#000" stroke-width="0.9625000000000001" stroke-dasharray="7 1.5"/>
<rect x="585.2" y="567.2" width="3.6" height="2.6" fill="#fff" stroke="#000" stroke-width="0.875"/>
<path d="M331 573.3l1.500 -2.600h3l1.500 2.600l-1.500 2.600h-3z" fill="#fff" stroke="#000" stroke-width="0.9625000000000001"/>
<text x="334" y="574.19" font-size="2.2" text-anchor="middle" stroke="#000" stroke-width="0.19">B</text>
<path d="M364.5 573.3l1.500 -2.600h3l1.500 2.600l-1.500 2.600h-3z" fill="#fff" stroke="#000" stroke-width="0.9625000000000001"/>
<text x="367.5" y="574.19" font-size="2.2" text-anchor="middle" stroke="#000" stroke-width="0.19">C</text>
<path d="M517.2 573.3l1.500 -2.600h3l1.500 2.600l-1.500 2.600h-3z" fill="#fff" stroke="#000" stroke-width="0.9625000000000001"/>
<text x="520.2" y="574.19" font-size="2.2" text-anchor="middle" stroke="#000" stroke-width="0.19">B</text>
<path d="M538 573.3l1.500 -2.600h3l1.500 2.600l-1.500 2.600h-3z" fill="#fff" stroke="#000" stroke-width="0.9625000000000001"/>
<text x="541" y="574.19" font-size="2.2" text-anchor="middle" stroke="#000" stroke-width="0.19">C</text>
<line x1="386" y1="572.8" x2="400" y2="572.8" stroke="#000" stroke-width="1.05" stroke-dasharray="4 1.5"/>
<rect x="400" y="571.6" width="14.3" height="5.2" fill="#fff" stroke="#000" stroke-width="1.05"/>
<text x="407.2" y="575.16" font-size="2.4" text-anchor="middle" stroke="#000" stroke-width="0.2">3-104A</text>
<rect x="298" y="571.8" width="13.7" height="5" fill="#fff" stroke="#000" stroke-width="1.05"/>
<text x="304.9" y="575.26" font-size="2.4" text-anchor="middle" stroke="#000" stroke-width="0.2">3-103A</text>
<text x="420.5" y="576.75" font-size="3.2" textLength="43.5" lengthAdjust="spacingAndGlyphs" stroke="#000" stroke-width="0.27">(E) RAISED BALCONY</text>
<rect x="478.5" y="569.7" width="13" height="4.8" fill="#fff" stroke="#000" stroke-width="1.05"/>
<text x="485" y="573.03" font-size="2.3" text-anchor="middle" stroke="#000" stroke-width="0.2">3-105A</text>
<rect x="570.5" y="570.3" width="13.2" height="4.4" fill="#fff" stroke="#000" stroke-width="1.05"/>
<text x="577.1" y="573.43" font-size="2.3" text-anchor="middle" stroke="#000" stroke-width="0.2">3-106A</text>
<rect x="570.5" y="576.9" width="13.2" height="5.1" fill="#fff" stroke="#000" stroke-width="1.05"/>
<text x="577.1" y="580.33" font-size="2.3" text-anchor="middle" stroke="#000" stroke-width="0.2">3-107A</text>
<rect x="476.5" y="576.9" width="16" height="5.4" fill="#fff" stroke="#000" stroke-width="1.2249999999999999" rx="2.7"/>
<text x="484.5" y="580.89" font-size="3.3" text-anchor="middle" stroke="#000" stroke-width="0.28">3.05</text>
<line x1="271.2" y1="590" x2="334" y2="590" stroke="#000" stroke-width="1.2249999999999999" stroke-dasharray="6 1.5"/>
<line x1="334" y1="590" x2="470" y2="590" stroke="#000" stroke-width="1.05"/>
<line x1="423" y1="590" x2="475" y2="590" stroke="#000" stroke-width="1.2249999999999999" stroke-dasharray="5 1.5"/>
<circle cx="274.5" cy="590" r="2" fill="none" stroke="#000" stroke-width="0.875"/>
<line x1="271" y1="589" x2="271" y2="613" stroke="#000" stroke-width="1.05" stroke-dasharray="6 2"/>
<line x1="423.9" y1="561" x2="423.9" y2="592" stroke="#000" stroke-width="0.875"/>
<rect x="423" y="591.3" width="9" height="1.7" fill="#000" stroke="#000" stroke-width="0.0"/>
<line x1="423.6" y1="458" x2="423.6" y2="500" stroke="#000" stroke-width="0.875"/>
<line x1="605.4" y1="458" x2="605.4" y2="500" stroke="#000" stroke-width="0.875"/>
<rect x="298.5" y="577" width="27.9" height="53.6" fill="none" stroke="#000" stroke-width="1.4000000000000001"/>
<rect x="294" y="578.5" width="36.5" height="21.7" fill="none" stroke="#000" stroke-width="1.575" stroke-dasharray="5 1.5" rx="2.5"/>
<line x1="312.2" y1="583" x2="312.2" y2="617" stroke="#000" stroke-width="1.05" stroke-dasharray="8 1.5 2 1.5"/>
<line x1="298.5" y1="587.5" x2="326.4" y2="587.5" stroke="#000" stroke-width="0.875"/>
<text x="312.5" y="582.75" font-size="3.2" text-anchor="middle" textLength="6.5" lengthAdjust="spacingAndGlyphs" stroke="#000" stroke-width="0.27">DN</text>
<text x="312.2" y="622.78" font-size="3" text-anchor="middle" textLength="26" lengthAdjust="spacingAndGlyphs" stroke="#000" stroke-width="0.26">STAIR &amp; OPNG</text>
<text x="312.2" y="628.58" font-size="3" text-anchor="middle" stroke="#000" stroke-width="0.26">6'-7"</text>
<text x="312.2" y="615.36" font-size="2.4" text-anchor="middle" fill="#23406b" stroke="#23406b" stroke-width="0.2">C</text>
<text x="312.2" y="618.66" font-size="2.4" text-anchor="middle" fill="#23406b" stroke="#23406b" stroke-width="0.2">L</text>
<circle cx="278.8" cy="619.6" r="6.6" fill="#fff" stroke="#000" stroke-width="1.4000000000000001"/>
<line x1="272.2" y1="619.8" x2="285.4" y2="619.8" stroke="#000" stroke-width="0.9625000000000001"/>
<text x="278.8" y="618.43" font-size="4.8" text-anchor="middle" font-weight="normal" stroke="#000" stroke-width="0.2">5</text>
<text x="278.8" y="623.53" font-size="2.3" text-anchor="middle" stroke="#000" stroke-width="0.2">A5.01</text>
<path d="M285.400 619.800 H290.500 L297.500 600" fill="none" stroke="#000" stroke-width="0.9625000000000001"/>
<rect x="332.85" y="593.4" width="16.5" height="6" fill="#fff" stroke="#000" stroke-width="1.2249999999999999" rx="3.0"/>
<text x="341.1" y="597.69" font-size="3.3" text-anchor="middle" stroke="#000" stroke-width="0.28">3.06</text>
<rect x="332.85" y="600.6" width="16.5" height="6" fill="#fff" stroke="#000" stroke-width="1.2249999999999999" rx="3.0"/>
<text x="341.1" y="604.89" font-size="3.3" text-anchor="middle" stroke="#000" stroke-width="0.28">3.02</text>
<rect x="332.85" y="611.6" width="16.5" height="6" fill="#fff" stroke="#000" stroke-width="1.2249999999999999" rx="3.0"/>
<text x="341.1" y="615.89" font-size="3.3" text-anchor="middle" stroke="#000" stroke-width="0.28">5.03</text>
<path d="M349.400 596.400 C356 595 357 588 361 584.500" fill="none" stroke="#000" stroke-width="0.875"/>
<path d="M332.800 603.600 C328 603 328 596 326.800 590" fill="none" stroke="#000" stroke-width="0.875"/>
<path d="M332.800 614.600 C318 613 312 602 298.500 596" fill="none" stroke="#000" stroke-width="0.875"/>
<rect x="332.7" y="518.7" width="17" height="6" fill="#fff" stroke="#000" stroke-width="1.2249999999999999" rx="3.0"/>
<text x="341.2" y="522.99" font-size="3.3" text-anchor="middle" stroke="#000" stroke-width="0.28">7.06</text>
<rect x="332.7" y="535.5" width="17" height="6" fill="#fff" stroke="#000" stroke-width="1.2249999999999999" rx="3.0"/>
<text x="341.2" y="539.79" font-size="3.3" text-anchor="middle" stroke="#000" stroke-width="0.28">8.01</text>
<text x="341.2" y="544.61" font-size="2.8" text-anchor="middle" stroke="#000" stroke-width="0.24">TYP</text>
<rect x="332.7" y="548.5" width="17" height="6" fill="#fff" stroke="#000" stroke-width="1.2249999999999999" rx="3.0"/>
<text x="341.2" y="552.79" font-size="3.3" text-anchor="middle" stroke="#000" stroke-width="0.28">8.06</text>
<text x="341.2" y="557.61" font-size="2.8" text-anchor="middle" stroke="#000" stroke-width="0.24">TYP</text>
<path d="M332.700 521.700 C323 521 328 503 324 497" fill="none" stroke="#000" stroke-width="0.875"/>
<path d="M332.700 538.500 C318 540 312 556 305.500 562" fill="none" stroke="#000" stroke-width="0.875"/>
<path d="M332.700 551.500 C329 553 335 563 336.500 567.500" fill="none" stroke="#000" stroke-width="0.875"/>
<text x="313.5" y="520.78" font-size="4.4" text-anchor="middle" font-weight="normal" fill="#0c1220" stroke="#0c1220" stroke-width="0.22">FOURTH</text>
<text x="313.5" y="524.98" font-size="4.4" text-anchor="middle" font-weight="normal" fill="#0c1220" stroke="#0c1220" stroke-width="0.22">GRADE</text>
<text x="400" y="520.78" font-size="4.4" text-anchor="middle" font-weight="normal" fill="#0c1220" stroke="#0c1220" stroke-width="0.22">FOURTH</text>
<text x="400" y="524.98" font-size="4.4" text-anchor="middle" font-weight="normal" fill="#0c1220" stroke="#0c1220" stroke-width="0.22">GRADE</text>
<text x="487.3" y="520.78" font-size="4.4" text-anchor="middle" font-weight="normal" fill="#0c1220" stroke="#0c1220" stroke-width="0.22">THIRD</text>
<text x="487.3" y="524.98" font-size="4.4" text-anchor="middle" font-weight="normal" fill="#0c1220" stroke="#0c1220" stroke-width="0.22">GRADE</text>
<text x="573.8" y="520.78" font-size="4.4" text-anchor="middle" font-weight="normal" fill="#0c1220" stroke="#0c1220" stroke-width="0.22">THIRD</text>
<text x="573.8" y="524.98" font-size="4.4" text-anchor="middle" font-weight="normal" fill="#0c1220" stroke="#0c1220" stroke-width="0.22">GRADE</text>
<rect x="305.95" y="526.6" width="15.7" height="4.3" fill="#fff" stroke="#000" stroke-width="1.05"/>
<rect x="305.95" y="530.9" width="15.7" height="4.3" fill="#fff" stroke="#000" stroke-width="1.05"/>
<text x="313.8" y="529.75" font-size="2.5" text-anchor="middle" stroke="#000" stroke-width="0.21">3-103</text>
<text x="313.8" y="534" font-size="2.5" text-anchor="middle" stroke="#000" stroke-width="0.21">836 SF</text>
<rect x="392.95" y="526.6" width="15.7" height="4.3" fill="#fff" stroke="#000" stroke-width="1.05"/>
<rect x="392.95" y="530.9" width="15.7" height="4.3" fill="#fff" stroke="#000" stroke-width="1.05"/>
<text x="400.8" y="529.75" font-size="2.5" text-anchor="middle" stroke="#000" stroke-width="0.21">3-104</text>
<text x="400.8" y="534" font-size="2.5" text-anchor="middle" stroke="#000" stroke-width="0.21">876 SF</text>
<rect x="479.25" y="526.6" width="15.7" height="4.3" fill="#fff" stroke="#000" stroke-width="1.05"/>
<rect x="479.25" y="530.9" width="15.7" height="4.3" fill="#fff" stroke="#000" stroke-width="1.05"/>
<text x="487.1" y="529.75" font-size="2.5" text-anchor="middle" stroke="#000" stroke-width="0.21">3-105</text>
<text x="487.1" y="534" font-size="2.5" text-anchor="middle" stroke="#000" stroke-width="0.21">880 SF</text>
<rect x="565.75" y="526.6" width="15.7" height="4.3" fill="#fff" stroke="#000" stroke-width="1.05"/>
<rect x="565.75" y="530.9" width="15.7" height="4.3" fill="#fff" stroke="#000" stroke-width="1.05"/>
<text x="573.6" y="529.75" font-size="2.5" text-anchor="middle" stroke="#000" stroke-width="0.21">3-106</text>
<text x="573.6" y="534" font-size="2.5" text-anchor="middle" stroke="#000" stroke-width="0.21">790 SF</text>
<path d="M287.4 531.7L294.5 524.6L301.6 531.7L294.5 538.8z" fill="#000" stroke="#000" stroke-width="0.0"/>
<line x1="284.5" y1="531.7" x2="304.5" y2="531.7" stroke="#000" stroke-width="1.2249999999999999"/>
<line x1="294.5" y1="523.4" x2="294.5" y2="540" stroke="#000" stroke-width="1.05"/>
<circle cx="294.5" cy="531.7" r="3.7" fill="#fff" stroke="#000" stroke-width="0.35000000000000003"/>
<line x1="290.8" y1="531.9" x2="298.2" y2="531.9" stroke="#000" stroke-width="0.7875"/>
<text x="294.5" y="531.04" font-size="2.9" text-anchor="middle" font-weight="normal">2</text>
<text x="294.5" y="534.35" font-size="1.8" text-anchor="middle" stroke="#000" stroke-width="0.15">A4.01</text>
<text x="294.5" y="522.23" font-size="2.3" text-anchor="middle" fill="#23406b" stroke="#23406b" stroke-width="0.2">N</text>
<text x="294.5" y="542.83" font-size="2.3" text-anchor="middle" fill="#23406b" stroke="#23406b" stroke-width="0.2">S</text>
<path d="M547.9 531.7L555 524.6L562.1 531.7L555 538.8z" fill="#000" stroke="#000" stroke-width="0.0"/>
<line x1="545" y1="531.7" x2="565" y2="531.7" stroke="#000" stroke-width="1.2249999999999999"/>
<line x1="555" y1="523.4" x2="555" y2="540" stroke="#000" stroke-width="1.05"/>
<circle cx="555" cy="531.7" r="3.7" fill="#fff" stroke="#000" stroke-width="0.35000000000000003"/>
<line x1="551.3" y1="531.9" x2="558.7" y2="531.9" stroke="#000" stroke-width="0.7875"/>
<text x="555" y="531.04" font-size="2.9" text-anchor="middle" font-weight="normal">3</text>
<text x="555" y="534.35" font-size="1.8" text-anchor="middle" stroke="#000" stroke-width="0.15">A4.01</text>
<text x="555" y="522.23" font-size="2.3" text-anchor="middle" fill="#23406b" stroke="#23406b" stroke-width="0.2">N</text>
<text x="555" y="542.83" font-size="2.3" text-anchor="middle" fill="#23406b" stroke="#23406b" stroke-width="0.2">S</text>
<path d="M286.9 484L290 480.9L293.1 484L290 487.1z" fill="#fff" stroke="#000" stroke-width="0.9625000000000001"/>
<text x="290" y="484.93" font-size="2.3" text-anchor="middle" font-weight="normal">A</text>
<path d="M286.9 553.5L290 550.4L293.1 553.5L290 556.6z" fill="#fff" stroke="#000" stroke-width="0.9625000000000001"/>
<text x="290" y="554.43" font-size="2.3" text-anchor="middle" font-weight="normal">A</text>
<path d="M362.9 526.8L366 523.7L369.1 526.8L366 529.9z" fill="#fff" stroke="#000" stroke-width="0.9625000000000001"/>
<text x="366" y="527.73" font-size="2.3" text-anchor="middle" font-weight="normal">A</text>
<path d="M449.6 526.8L452.7 523.7L455.8 526.8L452.7 529.9z" fill="#fff" stroke="#000" stroke-width="0.9625000000000001"/>
<text x="452.7" y="527.73" font-size="2.3" text-anchor="middle" font-weight="normal">A</text>
<path d="M515.9 526.8L519 523.7L522.1 526.8L519 529.9z" fill="#fff" stroke="#000" stroke-width="0.9625000000000001"/>
<text x="519" y="527.73" font-size="2.3" text-anchor="middle" font-weight="normal">A</text>
<path d="M449.6 554L452.7 550.9L455.8 554L452.7 557.1z" fill="#fff" stroke="#000" stroke-width="0.9625000000000001"/>
<text x="452.7" y="554.93" font-size="2.3" text-anchor="middle" font-weight="normal">A</text>
<path d="M545.2 483.6L548.3 480.5L551.4 483.6L548.3 486.7z" fill="#fff" stroke="#000" stroke-width="0.9625000000000001"/>
<text x="548.3" y="484.53" font-size="2.3" text-anchor="middle" font-weight="normal">A</text>
<path d="M595.4 483.6L598.5 480.5L601.6 483.6L598.5 486.7z" fill="#fff" stroke="#000" stroke-width="0.9625000000000001"/>
<text x="598.5" y="484.53" font-size="2.3" text-anchor="middle" font-weight="normal">A</text>
<path d="M536.9 565.5L540 562.4L543.1 565.5L540 568.6z" fill="#fff" stroke="#000" stroke-width="0.9625000000000001"/>
<text x="540" y="566.43" font-size="2.3" text-anchor="middle" font-weight="normal">A</text>
<path d="M595.3 560.7L598.4 557.6L601.5 560.7L598.4 563.8z" fill="#fff" stroke="#000" stroke-width="0.9625000000000001"/>
<text x="598.4" y="561.63" font-size="2.3" text-anchor="middle" font-weight="normal">A</text>
<path d="M624.9 530.5L628 527.4L631.1 530.5L628 533.6z" fill="#fff" stroke="#000" stroke-width="0.9625000000000001"/>
<text x="628" y="531.43" font-size="2.3" text-anchor="middle" font-weight="normal">A</text>
<path d="M625.5 588.6L628.6 585.5L631.7 588.6L628.6 591.7z" fill="#fff" stroke="#000" stroke-width="0.9625000000000001"/>
<text x="628.6" y="589.53" font-size="2.3" text-anchor="middle" font-weight="normal">A</text>
<path d="M286.900 484 H283.500 V494" fill="none" stroke="#000" stroke-width="0.875"/>
<path d="M286.900 553.500 H272" fill="none" stroke="#000" stroke-width="0.875"/>
<line x1="356.5" y1="526.8" x2="362.9" y2="526.8" stroke="#000" stroke-width="0.875"/>
<line x1="443.5" y1="526.8" x2="449.6" y2="526.8" stroke="#000" stroke-width="0.875"/>
<line x1="522.1" y1="526.8" x2="526.5" y2="526.8" stroke="#000" stroke-width="0.875"/>
<path d="M449.600 554 H446.500 V566" fill="none" stroke="#000" stroke-width="0.875"/>
<path d="M545.200 483.600 H541.500 V494" fill="none" stroke="#000" stroke-width="0.875"/>
<path d="M595.400 483.600 H591.500 V494" fill="none" stroke="#000" stroke-width="0.875"/>
<path d="M536.900 565.500 H533" fill="none" stroke="#000" stroke-width="0.875"/>
<path d="M595.300 560.700 H591.500 V568" fill="none" stroke="#000" stroke-width="0.875"/>
<line x1="618.2" y1="530.5" x2="624.9" y2="530.5" stroke="#000" stroke-width="0.875"/>
<text x="480.2" y="507.66" font-size="3.5" textLength="40" lengthAdjust="spacingAndGlyphs" stroke="#000" stroke-width="0.3">(N) PARTITION WALL</text>
<path d="M478.800 506.400 C466 507 455 517 444 519" fill="none" stroke="#000" stroke-width="0.875"/>
<text x="480.2" y="551.76" font-size="3.5" textLength="31.5" lengthAdjust="spacingAndGlyphs" stroke="#000" stroke-width="0.3">(N) SHOTCRETE</text>
<text x="480.2" y="556.76" font-size="3.5" textLength="24.5" lengthAdjust="spacingAndGlyphs" stroke="#000" stroke-width="0.3">SHEARWALL</text>
<path d="M478.800 551 C470 551 471 561 467.500 566.500" fill="none" stroke="#000" stroke-width="0.875"/>
<rect x="456.3" y="448" width="31" height="9.6" fill="none" stroke="#000" stroke-width="1.05" stroke-dasharray="1.1 .45" rx="2"/>
<text x="471.8" y="454.09" font-size="3.3" text-anchor="middle" textLength="22.5" lengthAdjust="spacingAndGlyphs" stroke="#000" stroke-width="0.28">CONC BLDG</text>
<path d="M486.3 462.2L489.5 456.6L492.7 462.2z" fill="#fff" stroke="#000" stroke-width="1.05"/>
<text x="489.5" y="461.36" font-size="2.4" text-anchor="middle" stroke="#000" stroke-width="0.2">1</text>
<path d="M456.300 453 C447 455 458 480 462.500 493" fill="none" stroke="#000" stroke-width="0.875"/>
<rect x="625.6" y="479.8" width="34.4" height="11.5" fill="none" stroke="#000" stroke-width="1.05" stroke-dasharray="1.1 .45" rx="2"/>
<text x="642.8" y="486.84" font-size="3.3" text-anchor="middle" textLength="27" lengthAdjust="spacingAndGlyphs" stroke="#000" stroke-width="0.28">WD ADDITION</text>
<path d="M659.1 494.1L662.3 488.5L665.5 494.1z" fill="#fff" stroke="#000" stroke-width="1.05"/>
<text x="662.3" y="493.26" font-size="2.4" text-anchor="middle" stroke="#000" stroke-width="0.2">1</text>
<path d="M625.600 485.500 C618 486 617 491 613 493.500" fill="none" stroke="#000" stroke-width="0.875"/>
<rect x="613.5" y="497.2" width="57" height="20.4" fill="none" stroke="#000" stroke-width="1.05" stroke-dasharray="1.1 .45" rx="2"/>
<path d="M667.8 521.2L671 515.6L674.2 521.2z" fill="#fff" stroke="#000" stroke-width="1.05"/>
<text x="671" y="520.36" font-size="2.4" text-anchor="middle" stroke="#000" stroke-width="0.2">1</text>
<circle cx="625.3" cy="504.2" r="2.4" fill="#fff" stroke="#000" stroke-width="0.875"/>
<text x="625.3" y="505.09" font-size="2.2" text-anchor="middle" stroke="#000" stroke-width="0.19">A</text>
<text x="630.5" y="505.42" font-size="3.1" textLength="35.5" lengthAdjust="spacingAndGlyphs" stroke="#000" stroke-width="0.26">RM - HEAD AT 9'-4"</text>
<rect x="613.5" y="549.6" width="57.5" height="18.7" fill="none" stroke="#000" stroke-width="1.05" stroke-dasharray="1.1 .45" rx="2"/>
<path d="M668.5 573.9L671.7 568.3L674.9 573.9z" fill="#fff" stroke="#000" stroke-width="1.05"/>
<text x="671.7" y="573.06" font-size="2.4" text-anchor="middle" stroke="#000" stroke-width="0.2">1</text>
<circle cx="625.3" cy="564" r="2.4" fill="#fff" stroke="#000" stroke-width="0.875"/>
<text x="625.3" y="564.89" font-size="2.2" text-anchor="middle" stroke="#000" stroke-width="0.19">A</text>
<text x="630.5" y="565.22" font-size="3.1" textLength="35.5" lengthAdjust="spacingAndGlyphs" stroke="#000" stroke-width="0.26">RM - HEAD AT 9'-4"</text>
<rect x="645.05" y="520.5" width="16.5" height="6" fill="#fff" stroke="#000" stroke-width="1.2249999999999999" rx="3.0"/>
<text x="653.3" y="524.79" font-size="3.3" text-anchor="middle" stroke="#000" stroke-width="0.28">8.05</text>
<path d="M645 523.500 C630 524 628 556 618.500 565" fill="none" stroke="#000" stroke-width="0.875"/>
<path d="M645 523.500 C632 522 626 510 618 503" fill="none" stroke="#000" stroke-width="0.875"/>
<path d="M422.6,440.8 L435.20000000000005,451 L422.6,461.2 L422.6,457.5 A6.5 6.5 0 0 0 422.6,444.5z" fill="#000"/>
<circle cx="423.6" cy="451" r="6.5" fill="#fff" stroke="#000" stroke-width="1.2249999999999999"/>
<line x1="417.1" y1="451.3" x2="430.1" y2="451.3" stroke="#000" stroke-width="0.875"/>
<text x="423.6" y="449.96" font-size="4.6" text-anchor="middle" font-weight="normal" stroke="#000" stroke-width="0.2">2</text>
<text x="423.6" y="454.8" font-size="2.5" text-anchor="middle" textLength="8" lengthAdjust="spacingAndGlyphs" stroke="#000" stroke-width="0.21">A3.01-3</text>
<path d="M604.4,440.8 L617.0,451 L604.4,461.2 L604.4,457.5 A6.5 6.5 0 0 0 604.4,444.5z" fill="#000"/>
<circle cx="605.4" cy="451" r="6.5" fill="#fff" stroke="#000" stroke-width="1.2249999999999999"/>
<line x1="598.9" y1="451.3" x2="611.9" y2="451.3" stroke="#000" stroke-width="0.875"/>
<text x="605.4" y="449.96" font-size="4.6" text-anchor="middle" font-weight="normal" stroke="#000" stroke-width="0.2">1</text>
<text x="605.4" y="454.8" font-size="2.5" text-anchor="middle" textLength="8" lengthAdjust="spacingAndGlyphs" stroke="#000" stroke-width="0.21">A3.01-3</text>
<path d="M648,529.0 L635.4,539.2 L648,549.4000000000001 L648,545.7 A6.5 6.5 0 0 1 648,532.7z" fill="#000"/>
<circle cx="647" cy="539.2" r="6.5" fill="#fff" stroke="#000" stroke-width="1.2249999999999999"/>
<line x1="640.5" y1="539.5" x2="653.5" y2="539.5" stroke="#000" stroke-width="0.875"/>
<text x="647" y="538.16" font-size="4.6" text-anchor="middle" font-weight="normal" stroke="#000" stroke-width="0.2">1</text>
<text x="647" y="543" font-size="2.5" text-anchor="middle" textLength="8" lengthAdjust="spacingAndGlyphs" stroke="#000" stroke-width="0.21">A3.02-3</text>
<path d="M413.40000000000003,638.4 L423.6,625.8 L433.8,638.4 L430.1,638.4 A6.5 6.5 0 0 0 417.1,638.4z" fill="#000"/>
<circle cx="423.6" cy="637.4" r="6.5" fill="#fff" stroke="#000" stroke-width="1.2249999999999999"/>
<line x1="417.1" y1="637.7" x2="430.1" y2="637.7" stroke="#000" stroke-width="0.875"/>
<text x="423.6" y="636.36" font-size="4.6" text-anchor="middle" font-weight="normal" stroke="#000" stroke-width="0.2">3</text>
<text x="423.6" y="641.2" font-size="2.5" text-anchor="middle" textLength="8" lengthAdjust="spacingAndGlyphs" stroke="#000" stroke-width="0.21">A3.01-3</text>
<rect x="475" y="584.5" width="129.5" height="18.3" fill="none" stroke="#000" stroke-width="1.2249999999999999"/>
<line x1="475" y1="600.3" x2="604.5" y2="600.3" stroke="#000" stroke-width="1.05"/>
<line x1="481.4" y1="584.5" x2="481.4" y2="614.7" stroke="#000" stroke-width="1.05"/>
<line x1="475" y1="590.1" x2="568" y2="590.1" stroke="#000" stroke-width="1.2249999999999999" stroke-dasharray="5 1.5"/>
<line x1="481.4" y1="592.1" x2="597" y2="592.1" stroke="#777" stroke-width="1.75"/>
<line x1="568.4" y1="584.5" x2="568.4" y2="614.7" stroke="#000" stroke-width="1.2249999999999999"/>
<line x1="566.2" y1="584.5" x2="566.2" y2="604" stroke="#000" stroke-width="0.875" stroke-dasharray="6 1.5"/>
<line x1="568.4" y1="604.8" x2="603" y2="604.8" stroke="#000" stroke-width="2.1" stroke-dasharray="6 1.5"/>
<line x1="591.8" y1="584.5" x2="591.8" y2="614.7" stroke="#000" stroke-width="1.2249999999999999"/>
<line x1="596.3" y1="584.5" x2="596.3" y2="614.7" stroke="#000" stroke-width="1.2249999999999999"/>
<line x1="481.4" y1="614.6" x2="612" y2="614.6" stroke="#000" stroke-width="1.2249999999999999"/>
<rect x="480.6" y="613.8" width="1.6" height="1.6" fill="#000" stroke="#000" stroke-width="0.0"/>
<rect x="567.6" y="613.8" width="1.6" height="1.6" fill="#000" stroke="#000" stroke-width="0.0"/>
<rect x="591" y="613.8" width="1.6" height="1.6" fill="#000" stroke="#000" stroke-width="0.0"/>
<rect x="595.5" y="613.8" width="1.6" height="1.6" fill="#000" stroke="#000" stroke-width="0.0"/>
<text x="525" y="613.28" font-size="3" text-anchor="middle" stroke="#000" stroke-width="0.26">30'-0"</text>
<text x="580" y="613.28" font-size="3" text-anchor="middle" stroke="#000" stroke-width="0.26">9'-0"</text>
<text x="606" y="613.28" font-size="3" text-anchor="middle" stroke="#000" stroke-width="0.26">2'-0"</text>
<text transform="translate(472.5,590.79) rotate(-90)" font-size="2.2" text-anchor="middle" stroke="#000" stroke-width="0.19">3'-8"</text>
<text transform="translate(472.5,607.79) rotate(-90)" font-size="2.2" text-anchor="middle" stroke="#000" stroke-width="0.19">5'</text>
<text x="574" y="587.74" font-size="2.6" text-anchor="middle" stroke="#000" stroke-width="0.22">1'-0"</text>
<circle cx="546.6" cy="624.1" r="6.6" fill="#fff" stroke="#000" stroke-width="1.2249999999999999"/>
<line x1="540" y1="624.3" x2="553.2" y2="624.3" stroke="#000" stroke-width="0.875"/>
<text x="546.6" y="622.86" font-size="4.6" text-anchor="middle" font-weight="normal" stroke="#000" stroke-width="0.15">1</text>
<text x="546.6" y="628.03" font-size="2.3" text-anchor="middle" stroke="#000" stroke-width="0.2">A5.01</text>
<path d="M553.200 624.400 H558.300 L567.400 604.500" fill="none" stroke="#000" stroke-width="0.9625000000000001"/>
<rect x="624.6" y="600.8" width="17.6" height="6" fill="#fff" stroke="#000" stroke-width="1.2249999999999999" rx="3.0"/>
<text x="633.4" y="605.09" font-size="3.3" text-anchor="middle" stroke="#000" stroke-width="0.28">3.03</text>
<rect x="624.6" y="610" width="17.6" height="6" fill="#fff" stroke="#000" stroke-width="1.2249999999999999" rx="3.0"/>
<text x="633.4" y="614.29" font-size="3.3" text-anchor="middle" stroke="#000" stroke-width="0.28">5.03</text>
<rect x="624.6" y="616" width="17.6" height="6" fill="#fff" stroke="#000" stroke-width="1.2249999999999999" rx="3.0"/>
<text x="633.4" y="620.29" font-size="3.3" text-anchor="middle" stroke="#000" stroke-width="0.28">3.06</text>
<text x="644.5" y="614.18" font-size="3" stroke="#000" stroke-width="0.26">TYP</text>
<path d="M624.600 603.800 C614 602 611 593 604.500 590.500" fill="none" stroke="#000" stroke-width="0.875"/>
<path d="M624.600 613 C614 611 610 603 603.500 601" fill="none" stroke="#000" stroke-width="0.875"/>
<path d="M624.600 619 C614 618 608 607 601 603.500" fill="none" stroke="#000" stroke-width="0.875"/>
<line x1="605.5" y1="561" x2="605.5" y2="594.5" stroke="#000" stroke-width="1.05"/>
<rect x="605" y="592.2" width="11" height="1.8" fill="#000" stroke="#000" stroke-width="0.0"/>
<line x1="616" y1="593.1" x2="623" y2="593.1" stroke="#000" stroke-width="0.875"/>
<path d="M625.500 588.600 H611 V584" fill="none" stroke="#000" stroke-width="0.875"/>
<rect x="597.9" y="574.4" width="13.7" height="4" fill="#fff" stroke="#000" stroke-width="0.875"/>
<rect x="597.9" y="578.4" width="13.7" height="4.1" fill="#fff" stroke="#000" stroke-width="0.875"/>
<text x="604.7" y="577.29" font-size="2.2" text-anchor="middle" stroke="#000" stroke-width="0.19">3-107</text>
<text x="604.7" y="581.29" font-size="2.2" text-anchor="middle" stroke="#000" stroke-width="0.19">86 SF</text>
<text x="605" y="572.61" font-size="2.8" text-anchor="middle" textLength="10" lengthAdjust="spacingAndGlyphs" stroke="#000" stroke-width="0.24">STOR</text>
<path d="M589.500 570 Q597 571 597.500 580" fill="none" stroke="#000" stroke-width="0.875"/>
<line x1="589.2" y1="568.5" x2="589.2" y2="584" stroke="#000" stroke-width="1.575"/>
<text x="390.3" y="620.76" font-size="3.5" textLength="46.5" lengthAdjust="spacingAndGlyphs" stroke="#000" stroke-width="0.3">(N) DOOR &amp; WINDOW IN</text>
<text x="390.3" y="625.86" font-size="3.5" textLength="40" lengthAdjust="spacingAndGlyphs" stroke="#000" stroke-width="0.3">(E) CONC WALL, TYP</text>
<path d="M389 619.700 C378 618 379 590 372.500 570" fill="none" stroke="#000" stroke-width="0.875"/>
<path d="M389 619.700 C378 612 395 568 404 559" fill="none" stroke="#000" stroke-width="0.875"/>
<text x="453.3" y="620.76" font-size="3.5" textLength="45.2" lengthAdjust="spacingAndGlyphs" stroke="#000" stroke-width="0.3">WOOD TRELLIS ABOVE</text>
<path d="M452 619.500 C441 620 443 597 436.500 588" fill="none" stroke="#000" stroke-width="0.875"/>
<line x1="117" y1="660.1" x2="668" y2="660.1" stroke="#000" stroke-width="1.4000000000000001"/>
<circle cx="110" cy="660.1" r="6.9" fill="#fff" stroke="#000" stroke-width="1.4000000000000001"/>
<line x1="103.1" y1="660.1" x2="116.9" y2="660.1" stroke="#000" stroke-width="1.05"/>
<text x="110" y="658.73" font-size="4.8" text-anchor="middle" font-weight="normal" stroke="#000" stroke-width="0.2">1</text>
<text x="110" y="663.86" font-size="2.4" text-anchor="middle" textLength="10" lengthAdjust="spacingAndGlyphs" stroke="#000" stroke-width="0.2">A2.01-3</text>
<text x="118.9" y="658.66" font-size="4.9" textLength="100.5" lengthAdjust="spacingAndGlyphs" stroke="#000" stroke-width="0.42">BUILDING 3 - PROPOSED FLOOR PLAN</text>
<text x="118.9" y="664.12" font-size="3.1" textLength="35" lengthAdjust="spacingAndGlyphs" stroke="#000" stroke-width="0.26">SCALE: 1/8" = 1'-0"</text>
</svg>
<!--PDF-E-->
</div>


<!-- ================= CHROME ================= -->
<div id="chr">
  <div class="tabstrip"></div><div class="tab"></div>
  <div class="tbar"></div><div class="tline"></div><div class="url"></div>
  <div class="foot"></div>
  <!--CHR-UI-START-->
  <!-- traffic lights (inactive) -->
  <div class="tl" style="left:13px;top:13px;background:#636568"></div>
  <div class="tl" style="left:33px;top:13px;background:#636568"></div>
  <div class="tl" style="left:53px;top:13px;background:#636568"></div>
  <!-- tab curves -->
  <svg class="abs" style="left:70px;top:32px" width="8" height="8" viewBox="0 0 8 8"><path d="M8 0v8H0a8 8 0 0 0 8-8z" fill="#35363a"/></svg>
  <svg class="abs" style="left:318px;top:32px" width="8" height="8" viewBox="0 0 8 8"><path d="M0 0v8h8a8 8 0 0 1-8-8z" fill="#35363a"/></svg>
  <!-- favicon -->
  <svg class="abs" style="left:89px;top:14px" width="18" height="18" viewBox="0 0 18 18"><circle cx="9" cy="9" r="8.300" fill="#fff"/><path d="M13.600 9.100c0-.4 0-.7-.1-1H9v1.900h2.600c-.1.600-.5 1.100-1 1.500v1.200h1.600c.9-.9 1.400-2.100 1.400-3.600z" fill="#4285f4"/><path d="M9 13.800c1.300 0 2.400-.4 3.200-1.100l-1.600-1.200c-.4.300-1 .5-1.600.5-1.200 0-2.300-.8-2.700-2H4.700v1.300c.8 1.500 2.400 2.500 4.300 2.500z" fill="#34a853"/><path d="M6.300 10c-.2-.6-.2-1.300 0-1.900V6.800H4.700c-.7 1.400-.7 3 0 4.400z" fill="#fbbc05"/><path d="M9 6.100c.7 0 1.300.2 1.800.7l1.400-1.400C11.400 4.600 10.300 4.200 9 4.200c-1.900 0-3.500 1-4.300 2.600l1.600 1.300c.4-1.200 1.500-2 2.700-2z" fill="#ea4335"/></svg>
  <div class="gtxt" style="left:114px;top:14px;font-size:12.700px;line-height:18px;color:#dfe1e5;letter-spacing:-.15px">Google</div>
  <svg class="abs" style="left:296px;top:17px" width="12" height="12" viewBox="0 0 12 12"><path d="M2 2l8 8M10 2l-8 8" stroke="#e8eaed" stroke-width="1.500"/></svg>
  <svg class="abs" style="left:333px;top:16px" width="14" height="14" viewBox="0 0 14 14"><path d="M7 1v12M1 7h12" stroke="#dadce0" stroke-width="1.700"/></svg>
  <!-- tab search -->
  <svg class="abs" style="left:938px;top:15px" width="16" height="16" viewBox="0 0 16 16"><circle cx="8" cy="8" r="7.200" fill="#bdc0c4"/><path d="M4.700 6.300h6.600L8 10.400z" fill="#3c3e41"/></svg>
  <!-- nav -->
  <svg class="abs" style="left:13px;top:50px" width="18" height="16" viewBox="0 0 18 16"><path d="M16 8H3M8.500 2L2.500 8l6 6" fill="none" stroke="#8d9094" stroke-width="1.800"/></svg>
  <svg class="abs" style="left:45px;top:50px" width="18" height="16" viewBox="0 0 18 16"><path d="M2 8h13M9.500 2l6 6-6 6" fill="none" stroke="#8d9094" stroke-width="1.800"/></svg>
  <svg class="abs" style="left:77px;top:49px" width="18" height="18" viewBox="0 0 18 18"><path d="M14.300 5.200A6.500 6.500 0 1 0 15.500 10.500" fill="none" stroke="#8d9094" stroke-width="1.800"/><path d="M15.800 2v5.800H10z" fill="#8d9094"/></svg>
  <!-- lock -->
  <svg class="abs" style="left:121px;top:51px" width="10" height="13" viewBox="0 0 10 13"><path d="M2.700 6V4a2.300 2.300 0 0 1 4.600 0v2" fill="none" stroke="#aeb1b5" stroke-width="1.400"/><rect x=".8" y="5.300" width="8.400" height="6.700" rx="1" fill="#aeb1b5"/></svg>
  <div class="gtxt" style="left:142px;top:49px;font-size:14px;line-height:18px;color:#fff;letter-spacing:.46px;text-shadow:0 0 .4px #fff">google.com</div>
  <!-- star -->
  <svg class="abs" style="left:774px;top:50px" width="16" height="16" viewBox="0 0 16 16"><path d="M8 1.800l1.900 4.100 4.400.5-3.300 3 .9 4.400L8 11.600l-3.900 2.200.9-4.400-3.300-3 4.400-.5z" fill="none" stroke="#dadce0" stroke-width="1.400" stroke-linejoin="round"/></svg>
  <!-- puzzle -->
  <svg class="abs" style="left:813px;top:49px" width="18" height="18" viewBox="0 0 18 18"><path d="M7.200 1.500a1.800 1.800 0 0 1 1.800 1.800v.9h3.600a1.200 1.200 0 0 1 1.200 1.200v3.100h.8a1.900 1.900 0 0 1 0 3.800h-.8v3.100a1.200 1.200 0 0 1-1.200 1.200H9.800v-.8a2 2 0 0 0-4 0v.8H2.900a1.200 1.200 0 0 1-1.200-1.200v-2.900h.8a2 2 0 0 0 0-4h-.8V5.400a1.200 1.200 0 0 1 1.200-1.200h2.500v-.9a1.800 1.800 0 0 1 1.800-1.800z" fill="#8d9094"/></svg>
  <!-- small avatar -->
  <div class="abs" style="left:843px;top:47px;width:22px;height:22px;border-radius:50%;background:#6a4638"></div>
  <div class="gtxt" style="left:843px;top:49px;width:22px;text-align:center;font-size:12px;line-height:18px;color:#fff">J</div>
  <!-- update pill -->
  <div class="abs" style="left:872px;top:44px;width:88px;height:28px;border-radius:14px;border:1px solid #6fae80;background:#2a322f"></div>
  <div class="gtxt" style="left:885px;top:49px;font-size:13.200px;line-height:18px;color:#9ea3a8;letter-spacing:.25px">Update</div>
  <svg class="abs" style="left:944px;top:49px" width="6" height="18" viewBox="0 0 6 18"><circle cx="3" cy="3.500" r="1.500" fill="#9ea3a8"/><circle cx="3" cy="9" r="1.500" fill="#9ea3a8"/><circle cx="3" cy="14.500" r="1.500" fill="#9ea3a8"/></svg>

  <!-- google page -->
  <div class="gtxt" style="left:26px;top:98px;font-size:14px;line-height:18px;color:#dadce0">About</div>
  <div class="gtxt" style="left:83px;top:98px;font-size:14px;line-height:18px;color:#dadce0">Store</div>
  <div class="gtxt" style="left:756px;top:98px;font-size:13px;line-height:18px;color:#fff;text-shadow:0 0 .5px #fff">Gmail</div>
  <div class="gtxt" style="left:804px;top:98px;font-size:13px;line-height:18px;color:#fff;text-shadow:0 0 .5px #fff">Images</div>
  <svg class="abs" style="left:876px;top:97px" width="20" height="20" viewBox="0 0 20 20" fill="#e8eaed"><circle cx="4" cy="4" r="2"/><circle cx="10" cy="4" r="2"/><circle cx="16" cy="4" r="2"/><circle cx="4" cy="10" r="2"/><circle cx="10" cy="10" r="2"/><circle cx="16" cy="10" r="2"/><circle cx="4" cy="16" r="2"/><circle cx="10" cy="16" r="2"/><circle cx="16" cy="16" r="2"/></svg>
  <div class="abs" style="left:918px;top:91px;width:32px;height:32px;border-radius:50%;background:#6a4638"></div>
  <div class="gtxt" style="left:918px;top:95px;width:32px;text-align:center;font-size:20px;line-height:24px;color:#fff">J</div>
<!--LOGO-S-->
  <svg class="abs" style="left:330px;top:200px" width="310" height="120" viewBox="1250 200 310 120" font-family="Liberation Sans, sans-serif" fill="#fff" stroke="#fff" stroke-width="1.3" stroke-linejoin="round"><text><tspan x="1263.1" y="283.7" font-size="97.7" textLength="79.2" lengthAdjust="spacingAndGlyphs">G</tspan><tspan x="1335.6" y="283.9" font-size="81.6" textLength="51.3" lengthAdjust="spacingAndGlyphs">o</tspan><tspan x="1383.7" y="283.9" font-size="81.6" textLength="51.1" lengthAdjust="spacingAndGlyphs">o</tspan><tspan x="1431.8" y="286.1" font-size="85.9" textLength="51.0" lengthAdjust="spacingAndGlyphs">g</tspan><tspan x="1476.4" y="282.7" font-size="89.2" textLength="23.7" lengthAdjust="spacingAndGlyphs">l</tspan><tspan x="1493.9" y="283.9" font-size="81.6" textLength="47.9" lengthAdjust="spacingAndGlyphs">e</tspan></text></svg>
<!--LOGO-E-->
  <!-- search box -->
  <div class="abs" style="left:192px;top:333px;width:584px;height:46px;border-radius:23px;border:1px solid #5f6368"></div>
  <svg class="abs" style="left:207px;top:346px" width="18" height="18" viewBox="0 0 18 18"><circle cx="7.300" cy="7.300" r="4.700" fill="none" stroke="#9aa0a6" stroke-width="1.700"/><path d="M10.800 10.800l5 5" stroke="#9aa0a6" stroke-width="1.900"/></svg>
  <!-- mic -->
  <svg class="abs" style="left:738px;top:344px" width="18" height="24" viewBox="0 0 18 24"><rect x="6.200" y="1.500" width="5.600" height="12.500" rx="2.800" fill="#4285f4"/><path d="M3 10.500a6 6 0 0 0 3 5.200" fill="none" stroke="#fbbc05" stroke-width="1.700"/><path d="M15 10.500a6 6 0 0 1-3 5.200" fill="none" stroke="#ea4335" stroke-width="1.700"/><path d="M5.500 15.400a6 6 0 0 0 7 0" fill="none" stroke="#34a853" stroke-width="1.700"/><path d="M9 16.500v5" stroke="#34a853" stroke-width="1.800"/></svg>
  <!-- buttons -->
  <div class="abs" style="left:343px;top:408px;width:128px;height:36px;border-radius:4px;background:#303134"></div>
  <div class="gtxt" style="left:343px;top:417px;width:128px;text-align:center;font-size:14px;line-height:18px">Google Search</div>
  <div class="abs" style="left:482px;top:408px;width:143px;height:36px;border-radius:4px;background:#303134"></div>
  <div class="gtxt" style="left:482px;top:417px;width:143px;text-align:center;font-size:14px;line-height:18px">I'm Feeling Lucky</div>
  <div class="gtxt" style="left:311px;top:466px;font-size:13px;line-height:18px;color:#8ab4f8">Learn about the latest innovations coming to Google Search</div>
  <!-- footer -->
  <svg class="abs" style="left:391px;top:727px" width="16" height="17" viewBox="0 0 16 17"><path d="M1.500 1.500c5-.5 10 3 12.500 9 .6 1.600.7 3.400.3 5-3.500.4-7.500-1.500-9.800-5C2.500 7.500 1.700 4.500 1.500 1.500z" fill="#3da743"/><path d="M1.500 1.500c3.500 3.500 8 8.500 12.800 14" fill="none" stroke="#8fd06a" stroke-width=".9"/><path d="M14 10.500c.6 1.600.7 3.400.3 5" fill="none" stroke="#9aa09a" stroke-width="1.200"/></svg>
  <div class="gtxt" style="left:411px;top:728px;font-size:14px;line-height:18px;color:#c4c7cb">Carbon neutral since 2007</div>
  <div class="gtxt" style="left:141px;top:775px;font-size:14px;line-height:18px;color:#c4c7cb">Advertising</div>
  <div class="gtxt" style="left:240px;top:775px;font-size:14px;line-height:18px;color:#c4c7cb">Business</div>
  <div class="gtxt" style="left:327px;top:775px;font-size:14px;line-height:18px;color:#c4c7cb">How Search works</div>
  <div class="gtxt" style="left:633px;top:775px;font-size:14px;line-height:18px;color:#c4c7cb">Privacy</div>
  <div class="gtxt" style="left:709px;top:775px;font-size:14px;line-height:18px;color:#c4c7cb">Terms</div>
  <div class="gtxt" style="left:777px;top:775px;font-size:14px;line-height:18px;color:#c4c7cb">Settings</div>
<!--CHR-UI-END-->
  <div class="shade"></div><div class="shade2"></div>
</div>
<div class="abs" style="left:918px;top:0;width:1px;height:788px;background:#747474"></div><div class="abs" style="left:919px;top:0;width:2px;height:788px;background:#050505"></div>
</body>
</html>
